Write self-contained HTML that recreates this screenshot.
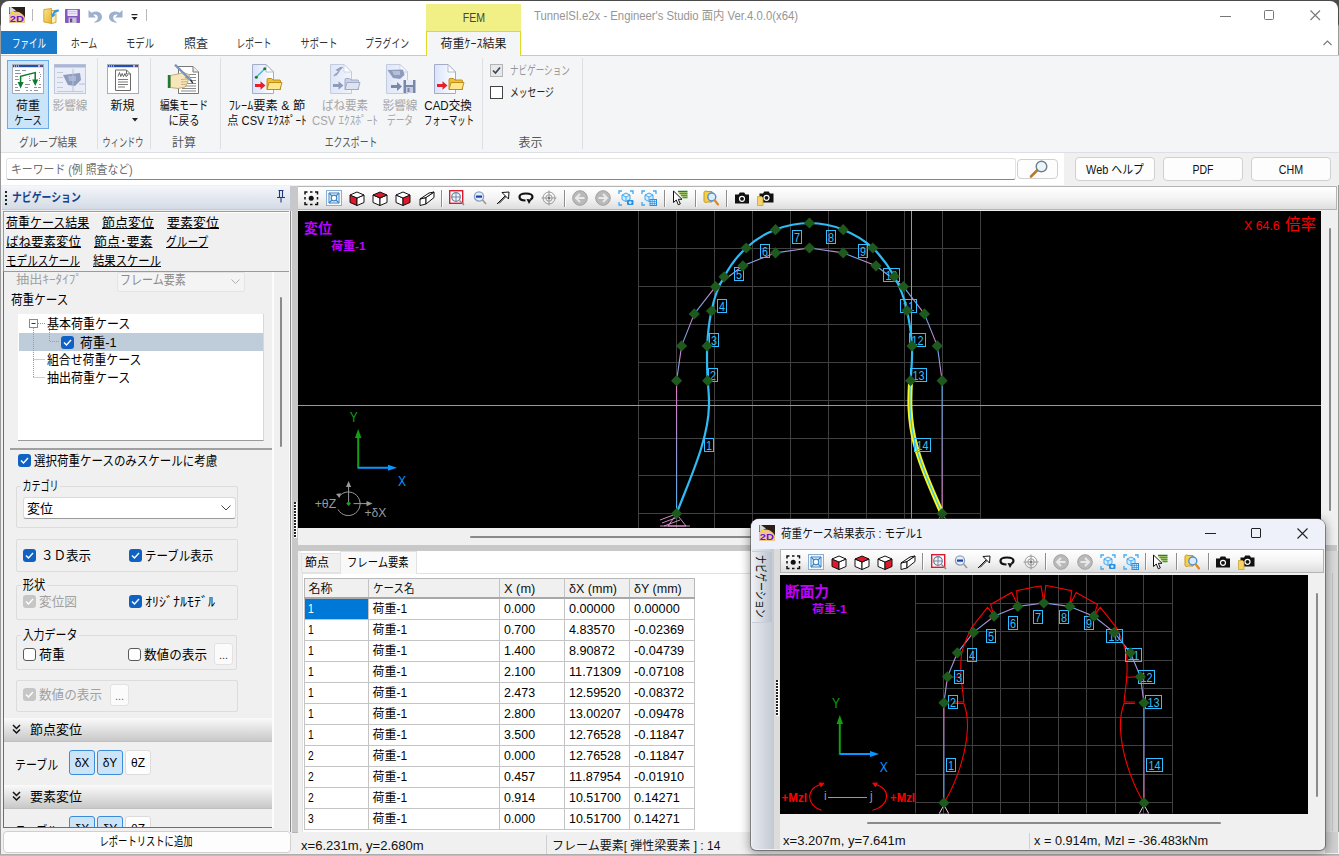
<!DOCTYPE html>
<html lang="ja"><head><meta charset="utf-8"><title>Engineer's Studio</title>
<style>
html,body{margin:0;padding:0;}
body{width:1339px;height:856px;overflow:hidden;position:relative;background:#f0f0f0;
font-family:"Liberation Sans","Noto Sans CJK JP",sans-serif;font-size:12px;}
.r{position:absolute;box-sizing:border-box;}
.t{position:absolute;white-space:nowrap;display:block;}
.u{text-decoration:underline;}
svg{overflow:visible;}
svg text{font-family:"Liberation Sans","Noto Sans CJK JP",sans-serif;}
</style></head>
<body>
<div class="r" style="left:0px;top:0px;width:1339px;height:856px;background:#f0f0f0;"></div>
<div class="r" style="left:0px;top:0px;width:1339px;height:14px;background:#4a4a4a;"></div>
<div class="r" style="left:1px;top:1px;width:1337px;height:54px;background:#ffffff;border-top-left-radius:8px;border-top-right-radius:8px;"></div>
<div class="r" style="left:0px;top:0px;width:1339px;height:1px;background:#4a4a4a;"></div>
<div class="r" style="left:0px;top:0px;width:1px;height:856px;background:linear-gradient(#4a4a4a,#4a4a4a 24px,#9a9a9a 26px);"></div>
<div class="r" style="left:1338px;top:0px;width:1px;height:856px;background:linear-gradient(#4a4a4a,#4a4a4a 24px,#9a9a9a 26px);"></div>
<svg class="r" style="left:9px;top:7px;" width="16" height="16" viewBox="0 0 16 16"><defs><clipPath id="ai1"><rect width="16" height="16"/></clipPath></defs><g clip-path="url(#ai1)"><rect x="0" y="0" width="16" height="16" fill="#2a2016"/>
<ellipse cx="6.5" cy="16" rx="10.5" ry="11.5" fill="#f0c68c"/>
<path d="M0.5 0 L2 0 L7 3.5 L2.5 5.5 L1.5 6 L0.5 6 Z" fill="#d8d8dc"/><rect x="3" y="4.5" width="2" height="2" fill="#f4e800"/>
<text x="0.8" y="15.3" font-size="9" font-weight="bold" fill="#6a10e0" textLength="14" lengthAdjust="spacingAndGlyphs">2D</text></g></svg>
<div class="r" style="left:32px;top:9px;width:1px;height:12px;background:#b8b8b8;"></div>
<svg class="r" style="left:43px;top:8px;" width="16" height="16" viewBox="0 0 16 16"><defs><linearGradient id="fo1" x1="0" x2="1" y1="0" y2="1"><stop offset="0" stop-color="#fbe68e"/><stop offset="1" stop-color="#e6b030"/></linearGradient></defs>
<path d="M0.8 1.5 L8.5 0.5 L8.5 15.5 L0.8 14 Z" fill="url(#fo1)" stroke="#c89b1c" stroke-width="0.8"/>
<path d="M8.5 2.5 L13 2.5 L13 14.5 L8.5 15.5 Z" fill="#fbeeb8" stroke="#c89b1c" stroke-width="0.8"/>
<path d="M15.8 1.6 C12 1.4 10.2 3 9.6 5.8 L8 5.2 L9.4 9.6 L12.8 6.8 L11.3 6.3 C11.8 4.6 13.2 3.6 15.8 3.8 Z" fill="#2f9be8"/></svg>
<svg class="r" style="left:65px;top:9px;" width="15" height="14" viewBox="0 0 15 14"><rect x="0" y="0" width="15" height="14" rx="0.8" fill="#8558c4"/>
<rect x="2.5" y="0.8" width="10" height="6.2" fill="#ece6f6"/><path d="M3.5 2.5 L11.5 2.5 M3.5 4.5 L11.5 4.5" stroke="#c9bce0" stroke-width="0.8"/>
<rect x="3.5" y="8.5" width="8" height="5.5" fill="#c4c4d0"/><rect x="5" y="9.5" width="2.2" height="3.8" fill="#6a4a9a"/></svg>
<svg class="r" style="left:87px;top:8px;" width="16" height="16" viewBox="0 0 16 16"><path d="M1.5 2 L1.5 9.5 L9 9.5 L6.2 6.8 C8.2 5.8 10.8 6.8 10.8 9.6 C10.8 12 9 13.6 6.5 14.4 C11 15 15 12.8 15 9 C15 4 9.2 1.8 4.4 4.8 Z" fill="#9db0cc"/></svg>
<svg class="r" style="left:108px;top:8px;" width="16" height="16" viewBox="0 0 16 16"><path d="M14.5 2 L14.5 9.5 L7 9.5 L9.8 6.8 C7.8 5.8 5.2 6.8 5.2 9.6 C5.2 12 7 13.6 9.5 14.4 C5 15 1 12.8 1 9 C1 4 6.8 1.8 11.6 4.8 Z" fill="#9db0cc"/></svg>
<svg class="r" style="left:130px;top:13.5px;" width="9" height="8" viewBox="0 0 9 8"><rect x="1.5" y="0" width="6" height="1.2" fill="#222"/><path d="M1.5 3 L7.5 3 L4.5 6.3 Z" fill="#222"/></svg>
<div class="r" style="left:146px;top:9px;width:1px;height:12px;background:#b8b8b8;"></div>
<span class="t " style="left:534px;top:8.0px;font-size:12px;line-height:16px;color:#969696;transform:scaleX(0.9429);transform-origin:left;">TunnelSI.e2x - Engineer's Studio 面内 Ver.4.0.0(x64)</span>
<div class="r" style="left:1220px;top:15.5px;width:11px;height:1px;background:#777;"></div>
<div class="r" style="left:1264px;top:10px;width:10px;height:10px;border:1px solid #777;border-radius:1.5px;"></div>
<svg class="r" style="left:1310px;top:10px;" width="11" height="11" viewBox="0 0 11 11"><path d="M0.5 0.5 L10 10 M10 0.5 L0.5 10" stroke="#777" stroke-width="1.1" fill="none"/></svg>
<svg class="r" style="left:1322.5px;top:40px;" width="10" height="6" viewBox="0 0 10 6"><path d="M0.5 5 L4.5 1 L8.5 5" stroke="#777" stroke-width="1.1" fill="none"/></svg>
<div class="r" style="left:426px;top:4px;width:95px;height:28px;background:#f0f087;"></div>
<span class="t " style="left:473.5px;top:10.0px;font-size:12px;line-height:16px;color:#444;transform:translateX(-50%) scaleX(0.8800);transform-origin:center;">FEM</span>
<div class="r" style="left:1px;top:31px;width:56px;height:23px;background:#1979ca;"></div>
<span class="t " style="left:29px;top:35.6px;font-size:12px;line-height:16px;color:#fff;transform:translateX(-50%) scaleX(0.7083);transform-origin:center;">ファイル</span>
<span class="t " style="left:84px;top:35.6px;font-size:12px;line-height:16px;color:#333;transform:translateX(-50%) scaleX(0.7500);transform-origin:center;">ホーム</span>
<span class="t " style="left:140px;top:35.6px;font-size:12px;line-height:16px;color:#333;transform:translateX(-50%) scaleX(0.7778);transform-origin:center;">モデル</span>
<span class="t " style="left:196px;top:35.6px;font-size:12px;line-height:16px;color:#333;transform:translateX(-50%) scaleX(1.0000);transform-origin:center;">照査</span>
<span class="t " style="left:254px;top:35.6px;font-size:12px;line-height:16px;color:#333;transform:translateX(-50%) scaleX(0.7292);transform-origin:center;">レポート</span>
<span class="t " style="left:319px;top:35.6px;font-size:12px;line-height:16px;color:#333;transform:translateX(-50%) scaleX(0.7708);transform-origin:center;">サポート</span>
<span class="t " style="left:387px;top:35.6px;font-size:12px;line-height:16px;color:#333;transform:translateX(-50%) scaleX(0.7333);transform-origin:center;">プラグイン</span>
<div class="r" style="left:1px;top:54.8px;width:1338px;height:1.3px;background:#dede1e;"></div>
<div class="r" style="left:426px;top:31px;width:94.5px;height:25px;background:#f4f5f7;border:1.5px solid #dcdc28;border-bottom:none;"></div>
<span class="t " style="left:473.5px;top:35.6px;font-size:12px;line-height:16px;color:#222;transform:translateX(-50%) scaleX(1.0000);transform-origin:center;">荷重ｹｰｽ結果</span>
<div class="r" style="left:1px;top:55.5px;width:1338px;height:97px;background:#f4f5f7;"></div>
<div class="r" style="left:1px;top:152px;width:1338px;height:1px;background:#dcdfe4;"></div>
<div class="r" style="left:7px;top:60px;width:42px;height:69px;background:#cce4f7;border:1px solid #6aaae6;"></div>
<svg class="r" style="left:12px;top:64px;" width="32" height="31" viewBox="0 0 32 31"><rect x="0.5" y="0.5" width="31" height="29" fill="#fff" stroke="#a9adb8"/>
<rect x="1" y="1" width="30" height="2.2" fill="#1f4fb4"/><rect x="26" y="1.4" width="2" height="1.2" fill="#fff"/><rect x="28.3" y="1.4" width="2" height="1.2" fill="#e33"/>
<g fill="#fff"><rect x="2" y="1.5" width="1" height="1"/><rect x="4" y="1.5" width="1" height="1"/><rect x="6" y="1.5" width="1" height="1"/></g><g fill="#8e939e"><rect x="3" y="6" width="5" height="1"/><rect x="10" y="6" width="4" height="1"/><rect x="3" y="9" width="6" height="1"/><rect x="3" y="12" width="3" height="1"/><rect x="3" y="15" width="4" height="1"/><rect x="3" y="20" width="2" height="1"/><rect x="3" y="23" width="3" height="1"/><rect x="3" y="26" width="5" height="1"/><rect x="13" y="20" width="5" height="1"/><rect x="13" y="23" width="3" height="1"/><rect x="14" y="26" width="2" height="1"/><rect x="18" y="26" width="2" height="1"/><rect x="22" y="23" width="3" height="1"/><rect x="22" y="26" width="4" height="1"/><rect x="27" y="20" width="2" height="1"/><rect x="26" y="23" width="3" height="1"/><rect x="17" y="12" width="1" height="1"/><rect x="17" y="14" width="1" height="1"/><rect x="17" y="16" width="2" height="1"/><rect x="27" y="8" width="1" height="1"/><rect x="28" y="10" width="1" height="1"/><rect x="28" y="12" width="1" height="1"/><rect x="27" y="14" width="1" height="1"/><rect x="27" y="16" width="1" height="1"/></g><path d="M8.6 19 L8.6 12.3 L23.2 8.6 L23.2 17" fill="none" stroke="#0c7a2c" stroke-width="1.5"/>
<path d="M5.6 18 L11.6 18 L8.6 24.5 Z M20.2 15.5 L26.2 15.5 L23.2 22 Z" fill="#0c7a2c"/></svg>
<span class="t " style="left:28px;top:98.3px;font-size:12px;line-height:16px;color:#111;transform:translateX(-50%) scaleX(1.0000);transform-origin:center;">荷重</span>
<span class="t " style="left:28px;top:113.3px;font-size:12px;line-height:16px;color:#111;transform:translateX(-50%) scaleX(0.7714);transform-origin:center;">ケース</span>
<svg class="r" style="left:54px;top:64px;" width="32" height="31" viewBox="0 0 32 31"><rect x="0.5" y="0.5" width="31" height="29" fill="#e9edf7" stroke="#c3c9dc"/>
<rect x="0.5" y="0.5" width="31" height="3" fill="#aab6d8"/>
<g fill="#c3c9dc"><rect x="3" y="8" width="6" height="1"/><rect x="3" y="13" width="6" height="1"/><rect x="3" y="18" width="6" height="1"/><rect x="3" y="23" width="6" height="1"/><rect x="3" y="27" width="26" height="1"/></g>
<path d="M9 11 L26 9 L27 16 L21 22 L14 21 Z" fill="#8d9bbd"/><path d="M14 12 L22 12 L22 17 L15 17 Z" fill="#aab6d4"/>
<path d="M19 5 L19 27 M25 20 L31 20" stroke="#b7c0da" stroke-width="1"/></svg>
<span class="t " style="left:69.5px;top:98.3px;font-size:12px;line-height:16px;color:#a6a6a6;transform:translateX(-50%) scaleX(0.9722);transform-origin:center;">影響線</span>
<span class="t " style="left:48px;top:134.5px;font-size:12px;line-height:16px;color:#555;transform:translateX(-50%) scaleX(0.8169);transform-origin:center;">グループ結果</span>
<div class="r" style="left:97px;top:58px;width:1px;height:91px;background:#dcdfe4;"></div>
<svg class="r" style="left:107px;top:64px;" width="32" height="31" viewBox="0 0 32 31"><rect x="0.5" y="0.5" width="31" height="29" fill="#fff" stroke="#a9adb8"/>
<rect x="1" y="1" width="30" height="2.2" fill="#1f4fb4"/><rect x="26" y="1.4" width="2" height="1.2" fill="#fff"/><rect x="28.3" y="1.4" width="2" height="1.2" fill="#e33"/>
<g fill="#fff"><rect x="2" y="1.5" width="1" height="1"/><rect x="4" y="1.5" width="1" height="1"/><rect x="6" y="1.5" width="1" height="1"/></g>
<path d="M8.5 6 L19.5 6 L23.5 10 L23.5 26.5 L8.5 26.5 Z" fill="#fff" stroke="#6a6a6a"/><path d="M19.5 6 L19.5 10 L23.5 10" fill="none" stroke="#6a6a6a"/>
<path d="M11 12.5 L12.5 8.5 L13.8 12.5 L15.2 9.5 L16.5 12.5 L18 9.5 L19 12.5 L21 11" fill="none" stroke="#555" stroke-width="0.9"/><g fill="#7a7a7a"><rect x="11" y="15" width="10" height="1"/><rect x="11" y="17.5" width="10" height="1"/><rect x="11" y="20" width="10" height="1"/><rect x="11" y="22.5" width="7" height="1"/></g></svg>
<span class="t " style="left:122.5px;top:98.3px;font-size:12px;line-height:16px;color:#111;transform:translateX(-50%) scaleX(1.0000);transform-origin:center;">新規</span>
<svg class="r" style="left:132px;top:118px;" width="7" height="4" viewBox="0 0 7 4"><path d="M0 0 L6 0 L3 3.5 Z" fill="#222"/></svg>
<span class="t " style="left:122.5px;top:134.5px;font-size:12px;line-height:16px;color:#555;transform:translateX(-50%) scaleX(0.6833);transform-origin:center;">ウィンドウ</span>
<div class="r" style="left:150px;top:58px;width:1px;height:91px;background:#dcdfe4;"></div>
<svg class="r" style="left:167px;top:64px;" width="33" height="31" viewBox="0 0 33 31"><path d="M11.5 2.5 L26 2.5 L31.5 8 L31.5 29.5 L11.5 29.5 Z" fill="#fff" stroke="#777"/><path d="M26 2.5 L26 8 L31.5 8" fill="#eee" stroke="#777"/><g fill="#8a8a8a"><rect x="22" y="10" width="7" height="1"/><rect x="23" y="13" width="6" height="1"/><rect x="23" y="16" width="6" height="1"/><rect x="20" y="19" width="9" height="1"/><rect x="18" y="21.5" width="11" height="1"/><rect x="15" y="24" width="14" height="1"/><rect x="14" y="26.5" width="15" height="1"/></g><path d="M3.5 11.5 L11 10 L16 8.5 L22 10.5 L22.5 13 L18 13.5 L21 15 L21 17.5 L20 20 L18 23 L11 24.5 L3.5 23.5 Z" fill="#f7e6bc" stroke="#b99a62" stroke-width="0.8"/>
<path d="M14 15.5 L20.5 15 M14 18 L20.5 17.6 M14 20.5 L19.5 20.2" stroke="#b99a62" stroke-width="0.7"/>
<rect x="0.8" y="11" width="2.6" height="13" fill="#1f7a33"/>
<path d="M8 0.8 L24 16.5" stroke="#5b7fb0" stroke-width="2.2"/><path d="M8 0.8 L24 16.5" stroke="#a9c0e0" stroke-width="0.7"/><path d="M23.5 16 L25.8 19" stroke="#333" stroke-width="1.3"/></svg>
<span class="t " style="left:184px;top:98.3px;font-size:12px;line-height:16px;color:#111;transform:translateX(-50%) scaleX(0.8000);transform-origin:center;">編集モード</span>
<span class="t " style="left:184px;top:113.3px;font-size:12px;line-height:16px;color:#111;transform:translateX(-50%) scaleX(0.8611);transform-origin:center;">に戻る</span>
<span class="t " style="left:184px;top:134.5px;font-size:12px;line-height:16px;color:#555;transform:translateX(-50%) scaleX(1.0000);transform-origin:center;">計算</span>
<div class="r" style="left:220px;top:58px;width:1px;height:91px;background:#dcdfe4;"></div>
<svg class="r" style="left:252px;top:64px;" width="32" height="31" viewBox="0 0 32 31"><defs><linearGradient id="pg1" x1="0" x2="1" y1="0" y2="0"><stop offset="0" stop-color="#d9e3fb"/><stop offset="1" stop-color="#ffffff"/></linearGradient></defs><path d="M0.5 0.5 L14 0.5 L21.5 8 L21.5 29.5 L0.5 29.5 Z" fill="url(#pg1)" stroke="#a3acc8"/><path d="M14 0.5 L14 8 L21.5 8 Z" fill="#fff" stroke="#a3acc8" stroke-width="0.8"/><path d="M4.5 13 L12.5 5" stroke="#3bb6d8" stroke-width="1.2"/><circle cx="4.3" cy="13.2" r="1.5" fill="#1c7a2c"/><circle cx="12.7" cy="4.8" r="1.5" fill="#1c7a2c"/><path d="M3 20 L8.5 20 L8.5 17.2 L13.5 21.5 L8.5 25.8 L8.5 23 L3 23 Z" fill="#e8202a"/><path d="M15 15.5 Q15 14.5 16 14.5 L19.5 14.5 L21 16 L27.5 16 Q28.5 16 28.5 17 L28.5 25.5 L15 25.5 Z" fill="#f2be3a" stroke="#b8860b" stroke-width="0.9"/><path d="M17 18.5 L30 18.5 L28 25.5 L15 25.5 Z" fill="#fde68e" stroke="#b8860b" stroke-width="0.9"/></svg>
<span class="t " style="left:266.5px;top:98.3px;font-size:12px;line-height:16px;color:#111;transform:translateX(-50%) scaleX(1.0267);transform-origin:center;">ﾌﾚｰﾑ要素 &amp; 節</span>
<span class="t " style="left:267px;top:113.3px;font-size:12px;line-height:16px;color:#111;transform:translateX(-50%) scaleX(0.9294);transform-origin:center;">点 CSV ｴｸｽﾎﾟｰﾄ</span>
<svg class="r" style="left:330px;top:64px;" width="32" height="31" viewBox="0 0 32 31"><defs><linearGradient id="pg2" x1="0" x2="1" y1="0" y2="0"><stop offset="0" stop-color="#dfe6f7"/><stop offset="1" stop-color="#f1f4fb"/></linearGradient></defs><path d="M0.5 0.5 L14 0.5 L21.5 8 L21.5 29.5 L0.5 29.5 Z" fill="url(#pg2)" stroke="#c3cbe0"/><path d="M14 0.5 L14 8 L21.5 8 Z" fill="#fff" stroke="#c3cbe0" stroke-width="0.8"/><path d="M4 12 L6.5 9.5 M6 11 L9 7 L7 6 L11 3.5 L9.5 6 L12.5 3" stroke="#93a0c2" stroke-width="1.5" fill="none"/><path d="M3 20 L8.5 20 L8.5 17.2 L13.5 21.5 L8.5 25.8 L8.5 23 L3 23 Z" fill="#8d9bbd"/><path d="M15 15.5 Q15 14.5 16 14.5 L19.5 14.5 L21 16 L27.5 16 Q28.5 16 28.5 17 L28.5 25.5 L15 25.5 Z" fill="#c9d2e6" stroke="#9aa6c2" stroke-width="0.9"/><path d="M17 18.5 L30 18.5 L28 25.5 L15 25.5 Z" fill="#dde3f0" stroke="#9aa6c2" stroke-width="0.9"/></svg>
<span class="t " style="left:344.5px;top:98.3px;font-size:12px;line-height:16px;color:#a6a6a6;transform:translateX(-50%) scaleX(0.9583);transform-origin:center;">ばね要素</span>
<span class="t " style="left:344.5px;top:113.3px;font-size:12px;line-height:16px;color:#a6a6a6;transform:translateX(-50%) scaleX(0.9429);transform-origin:center;">CSV ｴｸｽﾎﾟｰﾄ</span>
<svg class="r" style="left:386px;top:64px;" width="31" height="31" viewBox="0 0 31 31"><defs><linearGradient id="pg3" x1="0" x2="1" y1="0" y2="0"><stop offset="0" stop-color="#dfe6f7"/><stop offset="1" stop-color="#f1f4fb"/></linearGradient></defs><path d="M0.5 0.5 L14 0.5 L21.5 8 L21.5 29.5 L0.5 29.5 Z" fill="url(#pg3)" stroke="#c3cbe0"/><path d="M14 0.5 L14 8 L21.5 8 Z" fill="#fff" stroke="#c3cbe0" stroke-width="0.8"/><path d="M1.5 6 L17 5.5 L18.5 11 L14 15 L7 14 Z" fill="#8d9bbd"/><path d="M6 7 L14 7 L14 11 L8 11 Z" fill="#b5bfd8"/><path d="M5 21 L11 21 L11 18 L16 22.5 L11 27 L11 24 L5 24 Z" fill="#7a88a8"/><rect x="17.5" y="16" width="12" height="13" fill="#7a88a8"/><rect x="20" y="16" width="7" height="5" fill="#e6ebf7"/><rect x="20" y="23" width="7" height="6" fill="#c5cce0"/><rect x="21.5" y="24" width="2" height="4" fill="#7a88a8"/></svg>
<span class="t " style="left:399.5px;top:98.3px;font-size:12px;line-height:16px;color:#a6a6a6;transform:translateX(-50%) scaleX(0.9722);transform-origin:center;">影響線</span>
<span class="t " style="left:399.5px;top:113.3px;font-size:12px;line-height:16px;color:#a6a6a6;transform:translateX(-50%) scaleX(0.7222);transform-origin:center;">データ</span>
<svg class="r" style="left:434px;top:64px;" width="32" height="31" viewBox="0 0 32 31"><defs><linearGradient id="pg4" x1="0" x2="1" y1="0" y2="0"><stop offset="0" stop-color="#d9e3fb"/><stop offset="1" stop-color="#ffffff"/></linearGradient></defs><path d="M0.5 0.5 L14 0.5 L21.5 8 L21.5 29.5 L0.5 29.5 Z" fill="url(#pg4)" stroke="#a3acc8"/><path d="M14 0.5 L14 8 L21.5 8 Z" fill="#fff" stroke="#a3acc8" stroke-width="0.8"/><path d="M3 20 L8.5 20 L8.5 17.2 L13.5 21.5 L8.5 25.8 L8.5 23 L3 23 Z" fill="#e8202a"/><path d="M15 15.5 Q15 14.5 16 14.5 L19.5 14.5 L21 16 L27.5 16 Q28.5 16 28.5 17 L28.5 25.5 L15 25.5 Z" fill="#f2be3a" stroke="#b8860b" stroke-width="0.9"/><path d="M17 18.5 L30 18.5 L28 25.5 L15 25.5 Z" fill="#fde68e" stroke="#b8860b" stroke-width="0.9"/></svg>
<span class="t " style="left:448px;top:98.3px;font-size:12px;line-height:16px;color:#111;transform:translateX(-50%) scaleX(0.9592);transform-origin:center;">CAD交換</span>
<span class="t " style="left:448.5px;top:113.3px;font-size:12px;line-height:16px;color:#111;transform:translateX(-50%) scaleX(0.6944);transform-origin:center;">フォーマット</span>
<span class="t " style="left:350.5px;top:134.5px;font-size:12px;line-height:16px;color:#555;transform:translateX(-50%) scaleX(0.7361);transform-origin:center;">エクスポート</span>
<div class="r" style="left:482px;top:58px;width:1px;height:91px;background:#dcdfe4;"></div>
<div class="r" style="left:490px;top:64px;width:13px;height:13px;background:#e8e8e8;border:1px solid #b4b4b4;"></div>
<svg class="r" style="left:492px;top:66px;" width="9" height="9" viewBox="0 0 9 9"><path d="M1 4.5 L3.5 7 L8 1.5" stroke="#3a4660" stroke-width="1.7" fill="none"/></svg>
<span class="t " style="left:510px;top:62.8px;font-size:12px;line-height:16px;color:#969696;transform:scaleX(0.7143);transform-origin:left;">ナビゲーション</span>
<div class="r" style="left:490px;top:86px;width:13px;height:13px;background:#fff;border:1px solid #444;"></div>
<span class="t " style="left:510px;top:84.8px;font-size:12px;line-height:16px;color:#222;transform:scaleX(0.7333);transform-origin:left;">メッセージ</span>
<span class="t " style="left:530.5px;top:134.5px;font-size:12px;line-height:16px;color:#555;transform:translateX(-50%) scaleX(1.0000);transform-origin:center;">表示</span>
<div class="r" style="left:582px;top:58px;width:1px;height:91px;background:#dcdfe4;"></div>
<div class="r" style="left:1px;top:153px;width:1063px;height:32px;background:#ffffff;"></div>
<div class="r" style="left:1064px;top:153px;width:275px;height:32px;background:#f0f0f0;"></div>
<div class="r" style="left:6px;top:158px;width:1010px;height:22px;background:#fff;border:1px solid #e3e3e3;border-radius:3px;border-bottom:1px solid #868686;"></div>
<span class="t " style="left:11px;top:161.5px;font-size:12px;line-height:16px;color:#6e6e6e;transform:scaleX(0.9037);transform-origin:left;">キーワード (例 照査など)</span>
<div class="r" style="left:1017px;top:159px;width:41px;height:20px;background:#fdfdfd;border:1px solid #d0d0d0;border-radius:4px;"></div>
<svg class="r" style="left:1029px;top:160px;" width="20" height="18" viewBox="0 0 20 18"><path d="M2 16.5 L9 9.5" stroke="#b87a2c" stroke-width="2.6" stroke-linecap="round"/><circle cx="12.5" cy="6.5" r="5.3" fill="#e9f4fb" stroke="#6f7f8c" stroke-width="1.4"/></svg>
<div class="r" style="left:1075px;top:157px;width:80px;height:24px;background:#fdfdfd;border:1px solid #d0d0d0;border-radius:4px;"></div>
<span class="t " style="left:1115.0px;top:161.8px;font-size:12px;line-height:16px;color:#111;transform:translateX(-50%) scaleX(0.9062);transform-origin:center;">Web ヘルプ</span>
<div class="r" style="left:1163px;top:157px;width:80px;height:24px;background:#fdfdfd;border:1px solid #d0d0d0;border-radius:4px;"></div>
<span class="t " style="left:1203.0px;top:161.8px;font-size:12px;line-height:16px;color:#111;transform:translateX(-50%) scaleX(0.8750);transform-origin:center;">PDF</span>
<div class="r" style="left:1251px;top:157px;width:80px;height:24px;background:#fdfdfd;border:1px solid #d0d0d0;border-radius:4px;"></div>
<span class="t " style="left:1291.0px;top:161.8px;font-size:12px;line-height:16px;color:#111;transform:translateX(-50%) scaleX(0.8889);transform-origin:center;">CHM</span>
<div class="r" style="left:1px;top:832px;width:1338px;height:22px;background:#f0f0f0;"></div>
<div class="r" style="left:292px;top:831px;width:1046px;height:1.5px;background:#b4b4b4;"></div>
<div class="r" style="left:0px;top:853.5px;width:1339px;height:2.5px;background:linear-gradient(#a8a8a8,#c4c4c4);"></div>
<span class="t " style="left:301px;top:837.8px;font-size:12px;line-height:16px;color:#111;transform:scaleX(1.0885);transform-origin:left;">x=6.231m, y=2.680m</span>
<div class="r" style="left:546px;top:835px;width:1px;height:19px;background:#d0d0d0;"></div>
<span class="t " style="left:552px;top:837.8px;font-size:12px;line-height:16px;color:#111;transform:scaleX(1.0000);transform-origin:left;">フレーム要素[ 弾性梁要素 ] :  14</span>
<div class="r" style="left:1px;top:185px;width:291px;height:648px;background:#f0f0f0;"></div>
<div class="r" style="left:2px;top:186px;width:289px;height:24px;background:linear-gradient(#f4f6fa,#e2e7ef 55%,#d5dbe6);border-bottom:1px solid #c5cbd6;"></div>
<svg class="r" style="left:5px;top:190.5px;" width="3" height="16" viewBox="0 0 3 16"><rect x="0" y="0" width="2" height="2" fill="#222"/><rect x="0" y="4" width="2" height="2" fill="#222"/><rect x="0" y="8" width="2" height="2" fill="#222"/><rect x="0" y="12" width="2" height="2" fill="#222"/></svg>
<span class="t " style="left:12px;top:189.5px;font-size:12px;line-height:16px;color:#15428b;font-weight:bold;transform:scaleX(0.8214);transform-origin:left;">ナビゲーション</span>
<svg class="r" style="left:276px;top:190px;" width="10" height="13" viewBox="0 0 10 13"><path d="M2.5 0.5 L7.5 0.5 M3.5 0.5 L3.5 7 M6.5 0.5 L6.5 7 M1 7.5 L9 7.5 M5 7.5 L5 12.5" stroke="#1e3a7a" stroke-width="1.1" fill="none"/></svg>
<div class="r" style="left:3px;top:211px;width:287px;height:61px;background:#f0f0f0;border:1px solid #9a9a9a;"></div>
<div class="r" style="left:4px;top:212px;width:285px;height:1px;background:#fff;"></div>
<span class="t u" style="left:6px;top:213.6px;font-size:13px;line-height:18px;color:#000;transform:scaleX(0.9222);transform-origin:left;">荷重ケース結果</span>
<span class="t u" style="left:102px;top:213.6px;font-size:13px;line-height:18px;color:#000;transform:scaleX(1.0000);transform-origin:left;">節点変位</span>
<span class="t u" style="left:167px;top:213.6px;font-size:13px;line-height:18px;color:#000;transform:scaleX(1.0000);transform-origin:left;">要素変位</span>
<span class="t u" style="left:6px;top:232.6px;font-size:13px;line-height:18px;color:#000;transform:scaleX(0.9615);transform-origin:left;">ばね要素変位</span>
<span class="t u" style="left:94px;top:232.6px;font-size:13px;line-height:18px;color:#000;transform:scaleX(1.0000);transform-origin:left;">節点･要素</span>
<span class="t u" style="left:166px;top:232.6px;font-size:13px;line-height:18px;color:#000;transform:scaleX(0.8235);transform-origin:left;">グループ</span>
<span class="t u" style="left:6px;top:251.6px;font-size:13px;line-height:18px;color:#000;transform:scaleX(0.8132);transform-origin:left;">モデルスケール</span>
<span class="t u" style="left:93px;top:251.6px;font-size:13px;line-height:18px;color:#000;transform:scaleX(0.8718);transform-origin:left;">結果スケール</span>
<div class="r" style="left:3px;top:271px;width:287px;height:557px;background:#f0f0f0;border:1px solid #6e6e6e;border-top:1px solid #9a9a9a;"></div>
<div class="r" style="left:272px;top:272px;width:17px;height:556px;background:#f0f0f0;"></div>
<div class="r" style="left:271.5px;top:272px;width:2px;height:556px;background:#fcfcfc;"></div>
<div class="r" style="left:280px;top:297px;width:2px;height:150px;background:#8a8a8a;border-radius:1px;"></div>
<span class="t " style="left:16px;top:272.0px;font-size:12px;line-height:16px;color:#a0a0a0;transform:scaleX(1.1000);transform-origin:left;">抽出ｷｰﾀｲﾌﾟ</span>
<div class="r" style="left:117px;top:272px;width:128px;height:20px;background:#f4f4f4;border:1px solid #e4e4e4;border-radius:2px;"></div>
<span class="t " style="left:120px;top:271.3px;font-size:13px;line-height:17px;color:#8a8a8a;transform:scaleX(0.8462);transform-origin:left;">フレーム要素</span>
<svg class="r" style="left:231px;top:279px;" width="9" height="5" viewBox="0 0 9 5"><path d="M0.5 0.5 L4.5 4.5 L8.5 0.5" stroke="#b0b0b0" stroke-width="1" fill="none"/></svg>
<span class="t " style="left:11px;top:291.0px;font-size:13px;line-height:17px;color:#000;transform:scaleX(0.8906);transform-origin:left;">荷重ケース</span>
<div class="r" style="left:18px;top:314px;width:246px;height:127px;background:#fff;border-bottom:1px solid #9a9a9a;border-right:1px solid #d8d8d8;"></div>
<div class="r" style="left:19px;top:333px;width:244px;height:18px;background:#bfcddb;"></div>
<svg class="r" style="left:18px;top:314px;" width="60" height="80" viewBox="0 0 60 80"><path d="M15.5 14 L15.5 63 M20 9.5 L27 9.5 M15.5 45.5 L27 45.5 M15.5 63.5 L27 63.5 M31.5 14 L31.5 27.5 L41 27.5" stroke="#9a9a9a" stroke-width="1" stroke-dasharray="1 1" fill="none"/>
<rect x="11.5" y="5.5" width="8" height="8" fill="#fff" stroke="#8a8a8a"/><path d="M13.5 9.5 L17.5 9.5" stroke="#333"/></svg>
<span class="t " style="left:47px;top:315.0px;font-size:13px;line-height:17px;color:#000;transform:scaleX(0.9222);transform-origin:left;">基本荷重ケース</span>
<div class="r" style="left:61px;top:336px;width:13px;height:13px;background:#0f62c4;border-radius:3px;"></div>
<svg class="r" style="left:63px;top:339px;" width="9" height="7" viewBox="0 0 9 7"><path d="M1 3.5 L3.5 6 L8 1" stroke="#fff" stroke-width="1.4" fill="none"/></svg>
<span class="t " style="left:80px;top:333.5px;font-size:13px;line-height:17px;color:#000;transform:scaleX(0.9737);transform-origin:left;">荷重-1</span>
<span class="t " style="left:47px;top:351.0px;font-size:13px;line-height:17px;color:#000;transform:scaleX(0.9126);transform-origin:left;">組合せ荷重ケース</span>
<span class="t " style="left:47px;top:369.0px;font-size:13px;line-height:17px;color:#000;transform:scaleX(0.9222);transform-origin:left;">抽出荷重ケース</span>
<div class="r" style="left:10px;top:447.5px;width:262px;height:2px;background:#a0a0a0;"></div>
<div class="r" style="left:18px;top:454px;width:13px;height:13px;background:#0f62c4;border-radius:3px;"></div>
<svg class="r" style="left:20px;top:457px;" width="9" height="7" viewBox="0 0 9 7"><path d="M1 3.5 L3.5 6 L8 1" stroke="#fff" stroke-width="1.4" fill="none"/></svg>
<span class="t " style="left:34px;top:452.0px;font-size:13px;line-height:17px;color:#000;transform:scaleX(0.8841);transform-origin:left;">選択荷重ケースのみスケールに考慮</span>
<div class="r" style="left:15.5px;top:485.5px;width:222.5px;height:42px;border:1px solid #dcdcdc;border-radius:2px;"></div>
<span class="t " style="left:21px;top:477.0px;font-size:13px;line-height:17px;color:#000;transform:scaleX(0.6964);transform-origin:left;background:#f0f0f0;padding:0 2px;">カテゴリ</span>
<div class="r" style="left:23px;top:496.5px;width:212.5px;height:22px;background:#fff;border:1px solid #dadada;border-radius:3px;border-bottom:1px solid #9a9a9a;"></div>
<span class="t " style="left:27px;top:499.5px;font-size:13px;line-height:17px;color:#000;transform:scaleX(1.0000);transform-origin:left;">変位</span>
<svg class="r" style="left:221px;top:505px;" width="10" height="6" viewBox="0 0 10 6"><path d="M0.5 0.5 L5 5 L9.5 0.5" stroke="#444" stroke-width="1" fill="none"/></svg>
<div class="r" style="left:15.5px;top:539px;width:222.5px;height:32.5px;border:1px solid #dcdcdc;border-radius:2px;"></div>
<div class="r" style="left:23px;top:549px;width:13px;height:13px;background:#0f62c4;border-radius:3px;"></div>
<svg class="r" style="left:25px;top:552px;" width="9" height="7" viewBox="0 0 9 7"><path d="M1 3.5 L3.5 6 L8 1" stroke="#fff" stroke-width="1.4" fill="none"/></svg>
<span class="t " style="left:41px;top:547.0px;font-size:13px;line-height:17px;color:#000;transform:scaleX(0.9615);transform-origin:left;">３Ｄ表示</span>
<div class="r" style="left:129px;top:549px;width:13px;height:13px;background:#0f62c4;border-radius:3px;"></div>
<svg class="r" style="left:131px;top:552px;" width="9" height="7" viewBox="0 0 9 7"><path d="M1 3.5 L3.5 6 L8 1" stroke="#fff" stroke-width="1.4" fill="none"/></svg>
<span class="t " style="left:145px;top:547.0px;font-size:13px;line-height:17px;color:#000;transform:scaleX(0.8831);transform-origin:left;">テーブル表示</span>
<div class="r" style="left:15.5px;top:584.5px;width:222.5px;height:35px;border:1px solid #dcdcdc;border-radius:2px;"></div>
<span class="t " style="left:21px;top:575.5px;font-size:13px;line-height:17px;color:#000;transform:scaleX(0.8667);transform-origin:left;background:#f0f0f0;padding:0 2px;">形状</span>
<div class="r" style="left:23px;top:595px;width:13px;height:13px;background:#c6c6c6;border-radius:3px;"></div>
<svg class="r" style="left:25px;top:598px;" width="9" height="7" viewBox="0 0 9 7"><path d="M1 3.5 L3.5 6 L8 1" stroke="#fff" stroke-width="1.4" fill="none"/></svg>
<span class="t " style="left:39px;top:593.0px;font-size:13px;line-height:17px;color:#a0a0a0;transform:scaleX(0.9744);transform-origin:left;">変位図</span>
<div class="r" style="left:129px;top:595px;width:13px;height:13px;background:#0f62c4;border-radius:3px;"></div>
<svg class="r" style="left:131px;top:598px;" width="9" height="7" viewBox="0 0 9 7"><path d="M1 3.5 L3.5 6 L8 1" stroke="#fff" stroke-width="1.4" fill="none"/></svg>
<span class="t " style="left:145px;top:593.0px;font-size:13px;line-height:17px;color:#000;transform:scaleX(1.0769);transform-origin:left;">ｵﾘｼﾞﾅﾙﾓﾃﾞﾙ</span>
<div class="r" style="left:15.5px;top:634.5px;width:221.5px;height:35px;border:1px solid #dcdcdc;border-radius:2px;"></div>
<span class="t " style="left:21px;top:625.5px;font-size:13px;line-height:17px;color:#000;transform:scaleX(0.8406);transform-origin:left;background:#f0f0f0;padding:0 2px;">入力データ</span>
<div class="r" style="left:23px;top:648px;width:13px;height:13px;background:#fff;border:1px solid #5a5a5a;border-radius:3px;"></div>
<span class="t " style="left:39px;top:646.0px;font-size:13px;line-height:17px;color:#000;transform:scaleX(1.0000);transform-origin:left;">荷重</span>
<div class="r" style="left:128px;top:648px;width:13px;height:13px;background:#fff;border:1px solid #5a5a5a;border-radius:3px;"></div>
<span class="t " style="left:144px;top:646.0px;font-size:13px;line-height:17px;color:#000;transform:scaleX(0.9692);transform-origin:left;">数値の表示</span>
<div class="r" style="left:214px;top:643px;width:19px;height:22px;background:#fbfbfb;border:1px solid #e2e2e2;border-radius:3px;"></div>
<span class="t " style="left:223.5px;top:647.5px;font-size:11px;line-height:15px;color:#333;transform:translateX(-50%);">...</span>
<div class="r" style="left:15.5px;top:679.5px;width:222.5px;height:32px;border:1px solid #dcdcdc;border-radius:2px;"></div>
<div class="r" style="left:23px;top:688px;width:13px;height:13px;background:#c6c6c6;border-radius:3px;"></div>
<svg class="r" style="left:25px;top:691px;" width="9" height="7" viewBox="0 0 9 7"><path d="M1 3.5 L3.5 6 L8 1" stroke="#fff" stroke-width="1.4" fill="none"/></svg>
<span class="t " style="left:39px;top:686.0px;font-size:13px;line-height:17px;color:#a0a0a0;transform:scaleX(0.9692);transform-origin:left;">数値の表示</span>
<div class="r" style="left:110px;top:684px;width:19px;height:22px;background:#fbfbfb;border:1px solid #e2e2e2;border-radius:3px;"></div>
<span class="t " style="left:119.5px;top:688.5px;font-size:11px;line-height:15px;color:#666;transform:translateX(-50%);">...</span>
<div class="r" style="left:4px;top:717.8px;width:268px;height:24.5px;background:linear-gradient(#fafafa,#e6e6e6 40%,#c8c8c8);border-bottom:1px solid #c0c0c0;"></div>
<svg class="r" style="left:12px;top:724.3px;" width="9" height="11" viewBox="0 0 9 11"><path d="M1 1 L4.5 4.5 L8 1 M1 5.5 L4.5 9 L8 5.5" stroke="#111" stroke-width="1.5" fill="none"/></svg>
<span class="t " style="left:30px;top:720.8px;font-size:13px;line-height:17px;color:#000;transform:scaleX(1.0000);transform-origin:left;">節点変位</span>
<span class="t " style="left:15px;top:755.5px;font-size:13px;line-height:17px;color:#000;transform:scaleX(0.8431);transform-origin:left;">テーブル</span>
<div class="r" style="left:69px;top:750px;width:26px;height:25px;background:#cce4f7;border:1px solid #3c8cd8;border-radius:3px;"></div>
<span class="t " style="left:82px;top:755.0px;font-size:12px;line-height:16px;color:#000;transform:translateX(-50%);">δX</span>
<div class="r" style="left:97px;top:750px;width:26px;height:25px;background:#cce4f7;border:1px solid #3c8cd8;border-radius:3px;"></div>
<span class="t " style="left:110px;top:755.0px;font-size:12px;line-height:16px;color:#000;transform:translateX(-50%);">δY</span>
<div class="r" style="left:125px;top:750px;width:26px;height:25px;background:#fdfdfd;border:1px solid #dcdcdc;border-radius:3px;"></div>
<span class="t " style="left:138px;top:755.0px;font-size:12px;line-height:16px;color:#000;transform:translateX(-50%);">θZ</span>
<div class="r" style="left:4px;top:784.7px;width:268px;height:24.5px;background:linear-gradient(#fafafa,#e6e6e6 40%,#c8c8c8);border-bottom:1px solid #c0c0c0;"></div>
<svg class="r" style="left:12px;top:791.2px;" width="9" height="11" viewBox="0 0 9 11"><path d="M1 1 L4.5 4.5 L8 1 M1 5.5 L4.5 9 L8 5.5" stroke="#111" stroke-width="1.5" fill="none"/></svg>
<span class="t " style="left:30px;top:787.7px;font-size:13px;line-height:17px;color:#000;transform:scaleX(1.0000);transform-origin:left;">要素変位</span>
<div class="r" style="left:0px;top:810px;width:272px;height:17px;overflow:hidden;">
<span class="t " style="left:15px;top:11.5px;font-size:13px;line-height:17px;color:#000;transform:scaleX(0.8431);transform-origin:left;">テーブル</span>
<div class="r" style="left:69px;top:6px;width:26px;height:25px;background:#cce4f7;border:1px solid #3c8cd8;border-radius:3px;"></div>
<span class="t " style="left:82px;top:11.0px;font-size:12px;line-height:16px;color:#000;transform:translateX(-50%);">δX</span>
<div class="r" style="left:97px;top:6px;width:26px;height:25px;background:#cce4f7;border:1px solid #3c8cd8;border-radius:3px;"></div>
<span class="t " style="left:110px;top:11.0px;font-size:12px;line-height:16px;color:#000;transform:translateX(-50%);">δY</span>
<div class="r" style="left:125px;top:6px;width:26px;height:25px;background:#fdfdfd;border:1px solid #dcdcdc;border-radius:3px;"></div>
<span class="t " style="left:138px;top:11.0px;font-size:12px;line-height:16px;color:#000;transform:translateX(-50%);">θZ</span>
</div>
<div class="r" style="left:3px;top:830.5px;width:288px;height:22px;background:#fdfdfd;border:1px solid #d0d0d0;border-radius:4px;"></div>
<span class="t " style="left:146px;top:834.0px;font-size:12px;line-height:16px;color:#000;transform:translateX(-50%) scaleX(0.7750);transform-origin:center;">レポートリストに追加</span>
<div class="r" style="left:298px;top:186px;width:1039px;height:24px;background:linear-gradient(#ffffff,#f4f4f4 50%,#dedede);border:1px solid #b4b4b4;border-left:none;"></div>
<div class="r" style="left:290px;top:186px;width:1.5px;height:25px;background:#c4c8d0;"></div>
<div class="r" style="left:289.2px;top:211px;width:1px;height:621px;background:#fafafa;"></div>
<div class="r" style="left:290.2px;top:211px;width:1.2px;height:621px;background:#8c8c8c;"></div>
<div class="r" style="left:291.5px;top:186px;width:6.5px;height:646px;background:#c8c8c8;"></div>
<svg class="r" style="left:294px;top:502px;" width="3" height="36" viewBox="0 0 3 36"><rect x="0" y="0" width="3" height="3" fill="#fff"/><rect x="0" y="0" width="2" height="2" fill="#222"/><rect x="0" y="3" width="3" height="3" fill="#fff"/><rect x="0" y="3" width="2" height="2" fill="#222"/><rect x="0" y="6" width="3" height="3" fill="#fff"/><rect x="0" y="6" width="2" height="2" fill="#222"/><rect x="0" y="9" width="3" height="3" fill="#fff"/><rect x="0" y="9" width="2" height="2" fill="#222"/><rect x="0" y="12" width="3" height="3" fill="#fff"/><rect x="0" y="12" width="2" height="2" fill="#222"/><rect x="0" y="15" width="3" height="3" fill="#fff"/><rect x="0" y="15" width="2" height="2" fill="#222"/><rect x="0" y="18" width="3" height="3" fill="#fff"/><rect x="0" y="18" width="2" height="2" fill="#222"/><rect x="0" y="21" width="3" height="3" fill="#fff"/><rect x="0" y="21" width="2" height="2" fill="#222"/><rect x="0" y="24" width="3" height="3" fill="#fff"/><rect x="0" y="24" width="2" height="2" fill="#222"/><rect x="0" y="27" width="3" height="3" fill="#fff"/><rect x="0" y="27" width="2" height="2" fill="#222"/><rect x="0" y="30" width="3" height="3" fill="#fff"/><rect x="0" y="30" width="2" height="2" fill="#222"/><rect x="0" y="33" width="3" height="3" fill="#fff"/><rect x="0" y="33" width="2" height="2" fill="#222"/></svg>
<svg class="r" style="left:302.5px;top:189.5px" width="16" height="16" viewBox="0 0 16 16"><path d="M2 4.5 L2 2 L4.5 2 M7 2 L9.5 2 M12 2 L14.5 2 L14.5 4.5 M14.5 7 L14.5 9.5 M14.5 12 L14.5 14.5 L12 14.5 M9.5 14.5 L7 14.5 M4.5 14.5 L2 14.5 L2 12 M2 9.5 L2 7" fill="none" stroke="#111" stroke-width="1.5"/><circle cx="8.2" cy="8.2" r="2.5" fill="#111"/></svg><svg class="r" style="left:326.0px;top:189.5px" width="16" height="16" viewBox="0 0 16 16"><rect x="0.5" y="0.5" width="15" height="15" fill="#f4f8fc" stroke="#8aaed4"/><path d="M3 3 L13 3 L13 13 L3 13 Z" fill="none" stroke="#3f86c8" stroke-width="1"/><path d="M3 3 L6 6 M13 3 L10 6 M3 13 L6 10 M13 13 L10 10" stroke="#3f86c8" stroke-width="1.3"/><circle cx="8" cy="8" r="2.8" fill="#fff" stroke="#3f86c8" stroke-width="1.2"/></svg><svg class="r" style="left:349.0px;top:189.5px" width="16" height="16" viewBox="0 0 16 16"><path d="M1 5 L8 8 L8 15.5 L1 12.5 Z" fill="#e0182c" stroke="#111" stroke-width="1"/><path d="M8 8 L15 5 L15 12.5 L8 15.5 Z" fill="#fff" stroke="#111" stroke-width="1"/><path d="M1 5 L8 2 L15 5 L8 8 Z" fill="#fff" stroke="#111" stroke-width="1"/></svg><svg class="r" style="left:372.0px;top:189.5px" width="16" height="16" viewBox="0 0 16 16"><path d="M1 5 L8 8 L8 15.5 L1 12.5 Z" fill="#fff" stroke="#111" stroke-width="1"/><path d="M8 8 L15 5 L15 12.5 L8 15.5 Z" fill="#fff" stroke="#111" stroke-width="1"/><path d="M1 5 L8 2 L15 5 L8 8 Z" fill="#e0182c" stroke="#111" stroke-width="1"/></svg><svg class="r" style="left:395.0px;top:189.5px" width="16" height="16" viewBox="0 0 16 16"><path d="M1 5 L8 8 L8 15.5 L1 12.5 Z" fill="#fff" stroke="#111" stroke-width="1"/><path d="M8 8 L15 5 L15 12.5 L8 15.5 Z" fill="#e0182c" stroke="#111" stroke-width="1"/><path d="M1 5 L8 2 L15 5 L8 8 Z" fill="#fff" stroke="#111" stroke-width="1"/></svg><svg class="r" style="left:418.5px;top:189.5px" width="16" height="16" viewBox="0 0 16 16"><path d="M1 9 L7 7.5 L7 14 L1 15.5 Z" fill="#fff" stroke="#111"/><path d="M7 7.5 L15 2 L15 7.5 L7 14 Z" fill="#fff" stroke="#111"/><path d="M1 9 L10 3 L15 2 L7 7.5 Z" fill="#fff" stroke="#111"/></svg><svg class="r" style="left:448.5px;top:189.5px" width="16" height="16" viewBox="0 0 16 16"><rect x="0.7" y="0.7" width="13" height="12.6" fill="#fff" stroke="#e0182c" stroke-width="1.4"/><circle cx="7" cy="7" r="4.3" fill="#eef4fb" stroke="#6a7f9a" stroke-width="1.2"/><path d="M7 3 L7 11 M3 7 L11 7" stroke="#6a7f9a" stroke-width="0.9"/><path d="M10.5 10.5 L15 15" stroke="#888" stroke-width="1.4"/></svg><svg class="r" style="left:471.5px;top:189.5px" width="16" height="16" viewBox="0 0 16 16"><circle cx="7" cy="6.5" r="4.6" fill="#e6effa" stroke="#8aa0bd" stroke-width="1.3"/><rect x="4" y="5.5" width="6" height="2.2" fill="#1c3fb0"/><path d="M10.5 10 L14 14" stroke="#999" stroke-width="1.6"/></svg><svg class="r" style="left:495.0px;top:189.5px" width="16" height="16" viewBox="0 0 16 16"><path d="M2 14 L12 4 M4 13.5 L13 4.5" stroke="#111" stroke-width="1" fill="none"/><path d="M7 2.5 L14 2 L13.5 9 Z" fill="#fff" stroke="#111" stroke-width="1"/></svg><svg class="r" style="left:517.5px;top:189.5px" width="16" height="16" viewBox="0 0 16 16"><path d="M7.5 10.5 C3 10.5 1.5 8.5 1.5 7 C1.5 4.5 4.5 3.5 8 3.5 C11.5 3.5 14.5 4.8 14.5 7 C14.5 8.2 13.5 9 12.5 9.5" fill="none" stroke="#111" stroke-width="2.2"/><path d="M8.5 9 L13.5 9.5 L11 14 Z" fill="#111"/></svg><svg class="r" style="left:540.5px;top:189.5px" width="16" height="16" viewBox="0 0 16 16"><circle cx="8" cy="8" r="6" fill="none" stroke="#9a9a9a" stroke-width="1"/><circle cx="8" cy="8" r="3.2" fill="none" stroke="#9a9a9a" stroke-width="1"/><path d="M8 0.5 L8 15.5 M0.5 8 L15.5 8" stroke="#9a9a9a" stroke-width="1"/><circle cx="8" cy="8" r="1.2" fill="#777"/></svg><svg class="r" style="left:572.0px;top:189.5px" width="16" height="16" viewBox="0 0 16 16"><circle cx="8" cy="8" r="7.3" fill="#b9b9b9" stroke="#a2a2a2"/><path d="M12.5 8 L4.5 8 M8 4 L4 8 L8 12" stroke="#e9e9e9" stroke-width="2" fill="none"/></svg><svg class="r" style="left:595.0px;top:189.5px" width="16" height="16" viewBox="0 0 16 16"><circle cx="8" cy="8" r="7.3" fill="#b9b9b9" stroke="#a2a2a2"/><path d="M3.5 8 L11.5 8 M8 4 L12 8 L8 12" stroke="#e9e9e9" stroke-width="2" fill="none"/></svg><svg class="r" style="left:618.0px;top:189.5px" width="16" height="16" viewBox="0 0 16 16"><path d="M1 4 L1 1 L4 1 M12 1 L15 1 L15 4 M1 12 L1 15 L4 15" stroke="#3fa9f5" stroke-width="1.3" fill="none"/><path d="M8 3 L12 5 L12 9.5 L8 11.5 L4 9.5 L4 5 Z M4 5 L8 7 L12 5 M8 7 L8 11.5" fill="#d6ecfc" stroke="#3fa9f5" stroke-width="1"/><rect x="9" y="10" width="6.5" height="5" rx="1" fill="#2b8fe0"/><circle cx="12.2" cy="12.6" r="1.4" fill="#d6ecfc"/></svg><svg class="r" style="left:641.0px;top:189.5px" width="16" height="16" viewBox="0 0 16 16"><path d="M1 4 L1 1 L4 1 M12 1 L15 1 L15 4 M1 12 L1 15 L4 15" stroke="#3fa9f5" stroke-width="1.3" fill="none"/><path d="M8 3 L12 5 L12 9.5 L8 11.5 L4 9.5 L4 5 Z M4 5 L8 7 L12 5 M8 7 L8 11.5" fill="#d6ecfc" stroke="#3fa9f5" stroke-width="1"/><rect x="9" y="9.5" width="6.5" height="6" fill="#d6ecfc" stroke="#2b8fe0"/><path d="M9 11.5 L15.5 11.5 M9 13.5 L15.5 13.5 M11.2 9.5 L11.2 15.5 M13.4 9.5 L13.4 15.5" stroke="#2b8fe0" stroke-width="0.7"/></svg><svg class="r" style="left:671.5px;top:189.5px" width="16" height="16" viewBox="0 0 16 16"><path d="M6 1.5 L15.5 1.5 M7.5 3.5 L15.5 3.5 M9 5.5 L15.5 5.5 M10.5 7.5 L15.5 7.5" stroke="#128a2a" stroke-width="1.3"/><path d="M6 3 L15 3 M8 5 L15 5 M9.5 7 L15 7" stroke="#d8c020" stroke-width="0.6"/><path d="M1.5 1 L1.5 12.5 L4.3 10 L6.3 14.8 L8.3 13.9 L6.3 9.3 L10 9.3 Z" fill="#fff" stroke="#111" stroke-width="1"/></svg><svg class="r" style="left:703.0px;top:189.5px" width="16" height="16" viewBox="0 0 16 16"><path d="M1 2.5 C1 1 3 0.5 4 1.5 L9 1.5 L9 12 L4 12 C3 13 1 12.5 1 11 Z" fill="#f7cf4a" stroke="#c79a1c" stroke-width="1"/><circle cx="8.8" cy="7" r="4" fill="#d9ecfb" stroke="#4a8fd0" stroke-width="1.4"/><path d="M11.5 10 L15 14.5" stroke="#d98a2c" stroke-width="2.2" stroke-linecap="round"/></svg><svg class="r" style="left:734.0px;top:189.5px" width="16" height="16" viewBox="0 0 16 16"><path d="M1 4.5 L4.5 4.5 L5.8 2.5 L10.2 2.5 L11.5 4.5 L15 4.5 L15 13.5 L1 13.5 Z" fill="#111"/><circle cx="8" cy="8.8" r="3.1" fill="#fff"/><circle cx="8" cy="8.8" r="1.9" fill="#111"/></svg><svg class="r" style="left:757.0px;top:189.5px" width="16" height="16" viewBox="0 0 16 16"><g transform="translate(1.5,-1)"><path d="M1 4.5 L4.5 4.5 L5.8 2.5 L10.2 2.5 L11.5 4.5 L15 4.5 L15 13.5 L1 13.5 Z" fill="#111"/><circle cx="8" cy="8.8" r="3.1" fill="#fff"/><circle cx="8" cy="8.8" r="1.9" fill="#111"/></g><path d="M0.5 6.5 L4.5 6.5 L6 8 L6 15.5 L0.5 15.5 Z" fill="#f3d36a" stroke="#c9a52c" stroke-width="0.8"/></svg>
<div class="r" style="left:440.5px;top:190px;width:1px;height:17px;background:#8e8e8e"></div><div class="r" style="left:441.5px;top:190px;width:1px;height:17px;background:#fff"></div><div class="r" style="left:563.5px;top:190px;width:1px;height:17px;background:#8e8e8e"></div><div class="r" style="left:564.5px;top:190px;width:1px;height:17px;background:#fff"></div><div class="r" style="left:663.5px;top:190px;width:1px;height:17px;background:#8e8e8e"></div><div class="r" style="left:664.5px;top:190px;width:1px;height:17px;background:#fff"></div><div class="r" style="left:694.5px;top:190px;width:1px;height:17px;background:#8e8e8e"></div><div class="r" style="left:695.5px;top:190px;width:1px;height:17px;background:#fff"></div><div class="r" style="left:725.5px;top:190px;width:1px;height:17px;background:#8e8e8e"></div><div class="r" style="left:726.5px;top:190px;width:1px;height:17px;background:#fff"></div>
<div class="r" style="left:298px;top:211px;width:1023px;height:317px;background:#000;"></div>
<div class="r" style="left:1321px;top:211px;width:16px;height:317px;background:#f0f0f0;"></div>
<div class="r" style="left:1329px;top:228px;width:2px;height:283px;background:#8a8a8a;border-radius:1px;"></div>
<div class="r" style="left:298px;top:528px;width:1039px;height:18px;background:#f0f0f0;"></div>
<div class="r" style="left:470px;top:536px;width:560px;height:2px;background:#8a8a8a;border-radius:1px;"></div>
<svg class="r" style="left:0;top:0" width="1339" height="856" viewBox="0 0 1339 856"><defs><clipPath id="cv"><rect x="298" y="211" width="1023" height="317"/></clipPath><linearGradient id="eg0" gradientUnits="userSpaceOnUse" x1="676.6" y1="513.6" x2="676.6" y2="380.7"><stop offset="0" stop-color="#4fb4f4"/><stop offset="1" stop-color="#f07ac4"/></linearGradient><linearGradient id="eg1" gradientUnits="userSpaceOnUse" x1="676.6" y1="380.7" x2="681.6" y2="345.9"><stop offset="0" stop-color="#4fb4f4"/><stop offset="1" stop-color="#f07ac4"/></linearGradient><linearGradient id="eg2" gradientUnits="userSpaceOnUse" x1="681.6" y1="345.9" x2="694.3" y2="313.9"><stop offset="0" stop-color="#4fb4f4"/><stop offset="1" stop-color="#f07ac4"/></linearGradient><linearGradient id="eg3" gradientUnits="userSpaceOnUse" x1="694.3" y1="313.9" x2="715.5" y2="286.7"><stop offset="0" stop-color="#4fb4f4"/><stop offset="1" stop-color="#f07ac4"/></linearGradient><linearGradient id="eg4" gradientUnits="userSpaceOnUse" x1="715.5" y1="286.7" x2="742.9" y2="265.8"><stop offset="0" stop-color="#4fb4f4"/><stop offset="1" stop-color="#f07ac4"/></linearGradient><linearGradient id="eg5" gradientUnits="userSpaceOnUse" x1="742.9" y1="265.8" x2="775.5" y2="252.9"><stop offset="0" stop-color="#4fb4f4"/><stop offset="1" stop-color="#f07ac4"/></linearGradient><linearGradient id="eg6" gradientUnits="userSpaceOnUse" x1="775.5" y1="252.9" x2="809.4" y2="248"><stop offset="0" stop-color="#4fb4f4"/><stop offset="1" stop-color="#f07ac4"/></linearGradient><linearGradient id="eg7" gradientUnits="userSpaceOnUse" x1="809.4" y1="248" x2="843.2" y2="252.9"><stop offset="0" stop-color="#4fb4f4"/><stop offset="1" stop-color="#f07ac4"/></linearGradient><linearGradient id="eg8" gradientUnits="userSpaceOnUse" x1="843.2" y1="252.9" x2="876" y2="265.8"><stop offset="0" stop-color="#4fb4f4"/><stop offset="1" stop-color="#f07ac4"/></linearGradient><linearGradient id="eg9" gradientUnits="userSpaceOnUse" x1="876" y1="265.8" x2="903.5" y2="286.7"><stop offset="0" stop-color="#4fb4f4"/><stop offset="1" stop-color="#f07ac4"/></linearGradient><linearGradient id="eg10" gradientUnits="userSpaceOnUse" x1="903.5" y1="286.7" x2="924.4" y2="313.9"><stop offset="0" stop-color="#4fb4f4"/><stop offset="1" stop-color="#f07ac4"/></linearGradient><linearGradient id="eg11" gradientUnits="userSpaceOnUse" x1="924.4" y1="313.9" x2="937.3" y2="345.9"><stop offset="0" stop-color="#4fb4f4"/><stop offset="1" stop-color="#f07ac4"/></linearGradient><linearGradient id="eg12" gradientUnits="userSpaceOnUse" x1="937.3" y1="345.9" x2="942.1" y2="380.7"><stop offset="0" stop-color="#4fb4f4"/><stop offset="1" stop-color="#f07ac4"/></linearGradient><linearGradient id="eg13" gradientUnits="userSpaceOnUse" x1="942.1" y1="380.7" x2="942.1" y2="513.6"><stop offset="0" stop-color="#4fb4f4"/><stop offset="1" stop-color="#f07ac4"/></linearGradient></defs><g clip-path="url(#cv)"><path d="M638.5 211 L638.5 528" stroke="#404040" stroke-width="1" shape-rendering="crispEdges"/><path d="M676.5 211 L676.5 528" stroke="#404040" stroke-width="1" shape-rendering="crispEdges"/><path d="M714.5 211 L714.5 528" stroke="#404040" stroke-width="1" shape-rendering="crispEdges"/><path d="M752.5 211 L752.5 528" stroke="#404040" stroke-width="1" shape-rendering="crispEdges"/><path d="M790.5 211 L790.5 528" stroke="#404040" stroke-width="1" shape-rendering="crispEdges"/><path d="M828.5 211 L828.5 528" stroke="#404040" stroke-width="1" shape-rendering="crispEdges"/><path d="M866.5 211 L866.5 528" stroke="#404040" stroke-width="1" shape-rendering="crispEdges"/><path d="M904.5 211 L904.5 528" stroke="#404040" stroke-width="1" shape-rendering="crispEdges"/><path d="M942.5 211 L942.5 528" stroke="#404040" stroke-width="1" shape-rendering="crispEdges"/><path d="M980.5 211 L980.5 528" stroke="#404040" stroke-width="1" shape-rendering="crispEdges"/><path d="M638 248.5 L981 248.5" stroke="#404040" stroke-width="1" shape-rendering="crispEdges"/><path d="M638 286.5 L981 286.5" stroke="#404040" stroke-width="1" shape-rendering="crispEdges"/><path d="M638 324.5 L981 324.5" stroke="#404040" stroke-width="1" shape-rendering="crispEdges"/><path d="M638 362.5 L981 362.5" stroke="#404040" stroke-width="1" shape-rendering="crispEdges"/><path d="M638 400.5 L981 400.5" stroke="#404040" stroke-width="1" shape-rendering="crispEdges"/><path d="M638 438.5 L981 438.5" stroke="#404040" stroke-width="1" shape-rendering="crispEdges"/><path d="M638 475.5 L981 475.5" stroke="#404040" stroke-width="1" shape-rendering="crispEdges"/><path d="M638 513.5 L981 513.5" stroke="#404040" stroke-width="1" shape-rendering="crispEdges"/><path d="M298 405.5 L1321 405.5 M911.5 211 L911.5 528" stroke="#a8a830" stroke-width="1" shape-rendering="crispEdges"/><path d="M676.6 513.6 L676.6 380.7" stroke="url(#eg0)" stroke-width="1.1"/><path d="M676.6 380.7 L681.6 345.9" stroke="url(#eg1)" stroke-width="1.1"/><path d="M681.6 345.9 L694.3 313.9" stroke="url(#eg2)" stroke-width="1.1"/><path d="M694.3 313.9 L715.5 286.7" stroke="url(#eg3)" stroke-width="1.1"/><path d="M715.5 286.7 L742.9 265.8" stroke="url(#eg4)" stroke-width="1.1"/><path d="M742.9 265.8 L775.5 252.9" stroke="url(#eg5)" stroke-width="1.1"/><path d="M775.5 252.9 L809.4 248" stroke="url(#eg6)" stroke-width="1.1"/><path d="M809.4 248 L843.2 252.9" stroke="url(#eg7)" stroke-width="1.1"/><path d="M843.2 252.9 L876 265.8" stroke="url(#eg8)" stroke-width="1.1"/><path d="M876 265.8 L903.5 286.7" stroke="url(#eg9)" stroke-width="1.1"/><path d="M903.5 286.7 L924.4 313.9" stroke="url(#eg10)" stroke-width="1.1"/><path d="M924.4 313.9 L937.3 345.9" stroke="url(#eg11)" stroke-width="1.1"/><path d="M937.3 345.9 L942.1 380.7" stroke="url(#eg12)" stroke-width="1.1"/><path d="M942.1 380.7 L942.1 513.6" stroke="url(#eg13)" stroke-width="1.1"/><path d="M676.6 513.6 C690 478 708.5 440 709 405 C709.2 396 708.3 388 707.7 380.7 C707 369 706.8 357 707.2 345.9 C707.8 333 709 322 711.5 311 C714 298 718 287 724.1 276.8 C730 266 737 256 746.2 248 C754 240.5 764 234 775.5 229.7 C786 225.5 797 223 809.4 223 C821 223 833 225.5 843.2 229.7 C854 234 864.5 240.5 872.8 248 C881 256 888.5 266 894.3 276.5 C900 287 904.5 298 907 310.6 C909.5 322 911.3 333 912 345.9 C912.5 357 911.5 369 910.6 380.7" stroke="#2fbcf5" stroke-width="2.2" fill="none"/><path d="M910.6 380.7 C910 390 909.6 399 910 408 C910.8 425 913 436 915.6 445 C922 470 933 492 942.1 513.6" stroke="#f5f520" stroke-width="5" fill="none"/><path d="M910.6 380.7 C910 390 909.6 399 910 408 C910.8 425 913 436 915.6 445 C922 470 933 492 942.1 513.6" stroke="#3fc4e8" stroke-width="1.3" fill="none"/><path d="M676.6 514 L668 526 L686 526 Z M660 520 L676 514 M662 523 L678 517 M664 526 L680 520 M660 526 L690 526" stroke="#e79ad8" stroke-width="0.9" fill="none"/><path d="M942.1 514 L934 526 L951 526 Z" stroke="#e79ad8" stroke-width="0.9" fill="none"/><rect x="704.5" y="438.5" width="9" height="13" fill="none" stroke="#30c0ff" stroke-width="1" shape-rendering="crispEdges"/><text x="709.0" y="450.0" font-size="13" fill="#30c0ff" text-anchor="middle" textLength="6" lengthAdjust="spacingAndGlyphs">1</text><rect x="708.5" y="368.5" width="9" height="13" fill="none" stroke="#30c0ff" stroke-width="1" shape-rendering="crispEdges"/><text x="713.0" y="380.0" font-size="13" fill="#30c0ff" text-anchor="middle" textLength="6" lengthAdjust="spacingAndGlyphs">2</text><rect x="709.5" y="333.5" width="9" height="13" fill="none" stroke="#30c0ff" stroke-width="1" shape-rendering="crispEdges"/><text x="714.0" y="345.0" font-size="13" fill="#30c0ff" text-anchor="middle" textLength="6" lengthAdjust="spacingAndGlyphs">3</text><rect x="717.5" y="299.5" width="9" height="13" fill="none" stroke="#30c0ff" stroke-width="1" shape-rendering="crispEdges"/><text x="722.0" y="311.0" font-size="13" fill="#30c0ff" text-anchor="middle" textLength="6" lengthAdjust="spacingAndGlyphs">4</text><rect x="734.5" y="267.5" width="9" height="13" fill="none" stroke="#30c0ff" stroke-width="1" shape-rendering="crispEdges"/><text x="739.0" y="279.0" font-size="13" fill="#30c0ff" text-anchor="middle" textLength="6" lengthAdjust="spacingAndGlyphs">5</text><rect x="760.5" y="244.5" width="9" height="13" fill="none" stroke="#30c0ff" stroke-width="1" shape-rendering="crispEdges"/><text x="765.0" y="256.0" font-size="13" fill="#30c0ff" text-anchor="middle" textLength="6" lengthAdjust="spacingAndGlyphs">6</text><rect x="792.5" y="230.5" width="9" height="13" fill="none" stroke="#30c0ff" stroke-width="1" shape-rendering="crispEdges"/><text x="797.0" y="242.0" font-size="13" fill="#30c0ff" text-anchor="middle" textLength="6" lengthAdjust="spacingAndGlyphs">7</text><rect x="826.5" y="230.5" width="9" height="13" fill="none" stroke="#30c0ff" stroke-width="1" shape-rendering="crispEdges"/><text x="831.0" y="242.0" font-size="13" fill="#30c0ff" text-anchor="middle" textLength="6" lengthAdjust="spacingAndGlyphs">8</text><rect x="858.5" y="244.5" width="9" height="13" fill="none" stroke="#30c0ff" stroke-width="1" shape-rendering="crispEdges"/><text x="863.0" y="256.0" font-size="13" fill="#30c0ff" text-anchor="middle" textLength="6" lengthAdjust="spacingAndGlyphs">9</text><rect x="883.5" y="268.5" width="16" height="13" fill="none" stroke="#30c0ff" stroke-width="1" shape-rendering="crispEdges"/><text x="891.5" y="280.0" font-size="13" fill="#30c0ff" text-anchor="middle" textLength="12" lengthAdjust="spacingAndGlyphs">10</text><rect x="900.5" y="299.5" width="16" height="13" fill="none" stroke="#30c0ff" stroke-width="1" shape-rendering="crispEdges"/><text x="908.5" y="311.0" font-size="13" fill="#30c0ff" text-anchor="middle" textLength="12" lengthAdjust="spacingAndGlyphs">11</text><rect x="909.5" y="333.5" width="16" height="13" fill="none" stroke="#30c0ff" stroke-width="1" shape-rendering="crispEdges"/><text x="917.5" y="345.0" font-size="13" fill="#30c0ff" text-anchor="middle" textLength="12" lengthAdjust="spacingAndGlyphs">12</text><rect x="910.5" y="368.5" width="16" height="13" fill="none" stroke="#30c0ff" stroke-width="1" shape-rendering="crispEdges"/><text x="918.5" y="380.0" font-size="13" fill="#30c0ff" text-anchor="middle" textLength="12" lengthAdjust="spacingAndGlyphs">13</text><rect x="914.5" y="438.5" width="16" height="13" fill="none" stroke="#30c0ff" stroke-width="1" shape-rendering="crispEdges"/><text x="922.5" y="450.0" font-size="13" fill="#30c0ff" text-anchor="middle" textLength="12" lengthAdjust="spacingAndGlyphs">14</text><path d="M671.0 513.6 L676.6 508.0 L682.2 513.6 L676.6 519.2 Z" fill="#1e5a1e"/><path d="M671.0 380.7 L676.6 375.1 L682.2 380.7 L676.6 386.3 Z" fill="#1e5a1e"/><path d="M676.0 345.9 L681.6 340.3 L687.2 345.9 L681.6 351.5 Z" fill="#1e5a1e"/><path d="M688.7 313.9 L694.3 308.3 L699.9 313.9 L694.3 319.5 Z" fill="#1e5a1e"/><path d="M709.9 286.7 L715.5 281.1 L721.1 286.7 L715.5 292.3 Z" fill="#1e5a1e"/><path d="M737.3 265.8 L742.9 260.2 L748.5 265.8 L742.9 271.4 Z" fill="#1e5a1e"/><path d="M769.9 252.9 L775.5 247.3 L781.1 252.9 L775.5 258.5 Z" fill="#1e5a1e"/><path d="M803.8 248.0 L809.4 242.4 L815.0 248.0 L809.4 253.6 Z" fill="#1e5a1e"/><path d="M837.6 252.9 L843.2 247.3 L848.8 252.9 L843.2 258.5 Z" fill="#1e5a1e"/><path d="M870.4 265.8 L876.0 260.2 L881.6 265.8 L876.0 271.4 Z" fill="#1e5a1e"/><path d="M897.9 286.7 L903.5 281.1 L909.1 286.7 L903.5 292.3 Z" fill="#1e5a1e"/><path d="M918.8 313.9 L924.4 308.3 L930.0 313.9 L924.4 319.5 Z" fill="#1e5a1e"/><path d="M931.7 345.9 L937.3 340.3 L942.9 345.9 L937.3 351.5 Z" fill="#1e5a1e"/><path d="M936.5 380.7 L942.1 375.1 L947.7 380.7 L942.1 386.3 Z" fill="#1e5a1e"/><path d="M936.5 513.6 L942.1 508.0 L947.7 513.6 L942.1 519.2 Z" fill="#1e5a1e"/><path d="M702.1 380.7 L707.7 375.1 L713.3 380.7 L707.7 386.3 Z" fill="#1e5a1e"/><path d="M701.6 345.9 L707.2 340.3 L712.8 345.9 L707.2 351.5 Z" fill="#1e5a1e"/><path d="M705.9 311.0 L711.5 305.4 L717.1 311.0 L711.5 316.6 Z" fill="#1e5a1e"/><path d="M718.5 276.8 L724.1 271.2 L729.7 276.8 L724.1 282.4 Z" fill="#1e5a1e"/><path d="M740.6 248.0 L746.2 242.4 L751.8 248.0 L746.2 253.6 Z" fill="#1e5a1e"/><path d="M769.9 229.7 L775.5 224.1 L781.1 229.7 L775.5 235.3 Z" fill="#1e5a1e"/><path d="M803.8 223.0 L809.4 217.4 L815.0 223.0 L809.4 228.6 Z" fill="#1e5a1e"/><path d="M837.6 229.7 L843.2 224.1 L848.8 229.7 L843.2 235.3 Z" fill="#1e5a1e"/><path d="M867.2 248.0 L872.8 242.4 L878.4 248.0 L872.8 253.6 Z" fill="#1e5a1e"/><path d="M888.7 276.5 L894.3 270.9 L899.9 276.5 L894.3 282.1 Z" fill="#1e5a1e"/><path d="M901.4 310.6 L907.0 305.0 L912.6 310.6 L907.0 316.2 Z" fill="#1e5a1e"/><path d="M906.4 345.9 L912.0 340.3 L917.6 345.9 L912.0 351.5 Z" fill="#1e5a1e"/><path d="M905.0 380.7 L910.6 375.1 L916.2 380.7 L910.6 386.3 Z" fill="#1e5a1e"/><path d="M358.2 468.6 L358.2 433" stroke="#10a010" stroke-width="2"/><path d="M355 438 L358.2 429 L361.4 438 Z" fill="#10a010"/><path d="M358.2 467.8 L392 467.8" stroke="#0a96ff" stroke-width="2"/><path d="M388 464.8 L397 467.8 L388 470.8 Z" fill="#0a96ff"/><text x="353.8" y="421.8" font-size="14" fill="#10a010" text-anchor="middle" textLength="8" lengthAdjust="spacingAndGlyphs">Y</text><text x="402" y="486" font-size="14" fill="#0a96ff" text-anchor="middle" textLength="8" lengthAdjust="spacingAndGlyphs">X</text><path d="M339 496.5 A11.8 11.8 0 1 1 338 509.5" fill="none" stroke="#9a9a9a" stroke-width="1"/><path d="M348.6 503.6 L348.6 484 M353.5 503.6 L369 503.6" stroke="#9a9a9a" stroke-width="1"/><path d="M346 487 L348.6 481 L351.2 487 Z M366.5 501 L372.5 503.6 L366.5 506.2 Z M336 494 L341 493.2 L339.5 498 Z" fill="#9a9a9a"/><path d="M346.2 503.6 L348.6 501.2 L351.0 503.6 L348.6 506.0 Z" fill="#18a018"/><text x="314.7" y="508.3" font-size="12" fill="#9a9a9a" textLength="21.5" lengthAdjust="spacingAndGlyphs">+θZ</text><text x="364.4" y="517" font-size="12" fill="#9a9a9a" textLength="22" lengthAdjust="spacingAndGlyphs">+δX</text></g></svg>
<span class="t " style="left:304px;top:219.0px;font-size:14px;line-height:18px;color:#c000ff;font-weight:bold;transform:scaleX(1.0000);transform-origin:left;">変位</span>
<span class="t " style="left:331px;top:238.5px;font-size:11px;line-height:15px;color:#c000ff;font-weight:bold;transform:scaleX(1.0938);transform-origin:left;">荷重-1</span>
<span class="t " style="left:1244px;top:217.5px;font-size:12px;line-height:16px;color:#ff0000;transform:scaleX(1.0286);transform-origin:left;">X 64.6</span>
<span class="t " style="left:1285px;top:214.5px;font-size:16px;line-height:20px;color:#ff0000;transform:scaleX(0.9688);transform-origin:left;">倍率</span>
<div class="r" style="left:298px;top:545px;width:1039px;height:6px;background:#c8c8c8;"></div>
<div class="r" style="left:298px;top:551px;width:1039px;height:282px;background:#f0f0f0;"></div>
<div class="r" style="left:298px;top:551px;width:1039px;height:22px;background:#fff;"></div>
<div class="r" style="left:298px;top:551px;width:3px;height:22px;background:#f0f0f0;"></div>
<div class="r" style="left:300.5px;top:552.5px;width:40px;height:20px;background:#f0f0f0;border:1px solid #e2e2e2;"></div>
<div class="r" style="left:340px;top:551px;width:77px;height:23px;background:#f9f9f9;border:1px solid #e2e2e2;border-bottom:none;"></div>
<span class="t " style="left:305px;top:554.5px;font-size:12px;line-height:16px;color:#000;transform:scaleX(1.0000);transform-origin:left;">節点</span>
<span class="t " style="left:347px;top:554.5px;font-size:12px;line-height:16px;color:#000;transform:scaleX(0.8611);transform-origin:left;">フレーム要素</span>
<div class="r" style="left:302px;top:572.5px;width:1035px;height:259px;background:#fff;border-top:1px solid #e2e2e2;border-left:1px solid #e2e2e2;"></div>
<div class="r" style="left:341px;top:572px;width:75px;height:2px;background:#f9f9f9;"></div>
<div class="r" style="left:304px;top:578px;width:391px;height:20px;background:#f0f0f0;border:1px solid #b8b8b8;"></div>
<div class="r" style="left:368.0px;top:578px;width:1px;height:252px;background:#c4c4c4;"></div>
<div class="r" style="left:499.0px;top:578px;width:1px;height:252px;background:#c4c4c4;"></div>
<div class="r" style="left:564.0px;top:578px;width:1px;height:252px;background:#c4c4c4;"></div>
<div class="r" style="left:629.0px;top:578px;width:1px;height:252px;background:#c4c4c4;"></div>
<div class="r" style="left:304px;top:598px;width:1px;height:232px;background:#c4c4c4;"></div>
<div class="r" style="left:694px;top:598px;width:1px;height:232px;background:#c4c4c4;"></div>
<div class="r" style="left:304px;top:618.5px;width:391px;height:1px;background:#c4c4c4;"></div>
<div class="r" style="left:304px;top:639.5px;width:391px;height:1px;background:#c4c4c4;"></div>
<div class="r" style="left:304px;top:660.5px;width:391px;height:1px;background:#c4c4c4;"></div>
<div class="r" style="left:304px;top:681.5px;width:391px;height:1px;background:#c4c4c4;"></div>
<div class="r" style="left:304px;top:702.5px;width:391px;height:1px;background:#c4c4c4;"></div>
<div class="r" style="left:304px;top:723.5px;width:391px;height:1px;background:#c4c4c4;"></div>
<div class="r" style="left:304px;top:744.5px;width:391px;height:1px;background:#c4c4c4;"></div>
<div class="r" style="left:304px;top:765.5px;width:391px;height:1px;background:#c4c4c4;"></div>
<div class="r" style="left:304px;top:786.5px;width:391px;height:1px;background:#c4c4c4;"></div>
<div class="r" style="left:304px;top:807.5px;width:391px;height:1px;background:#c4c4c4;"></div>
<div class="r" style="left:304px;top:828.5px;width:391px;height:1px;background:#c4c4c4;"></div>
<div class="r" style="left:304px;top:597px;width:391px;height:1.5px;background:#a8a8a8;"></div>
<span class="t " style="left:308.5px;top:580.5px;font-size:12px;line-height:16px;color:#111;transform:scaleX(1.0000);transform-origin:left;">名称</span>
<span class="t " style="left:372.5px;top:580.5px;font-size:12px;line-height:16px;color:#111;transform:scaleX(0.8723);transform-origin:left;">ケース名</span>
<span class="t " style="left:503.5px;top:580.5px;font-size:12px;line-height:16px;color:#111;transform:scaleX(1.0690);transform-origin:left;">X (m)</span>
<span class="t " style="left:568.5px;top:580.5px;font-size:12px;line-height:16px;color:#111;transform:scaleX(1.0435);transform-origin:left;">δX (mm)</span>
<span class="t " style="left:633.5px;top:580.5px;font-size:12px;line-height:16px;color:#111;transform:scaleX(1.0435);transform-origin:left;">δY (mm)</span>
<div class="r" style="left:305px;top:598.5px;width:63px;height:20px;background:#0078d7;"></div>
<span class="t " style="left:307.5px;top:600.5px;font-size:12px;line-height:16px;color:#fff;transform:scaleX(0.8571);transform-origin:left;">1</span>
<span class="t " style="left:372.5px;top:600.5px;font-size:12px;line-height:16px;color:#000;transform:scaleX(1.0000);transform-origin:left;">荷重-1</span>
<span class="t " style="left:503.5px;top:600.5px;font-size:12px;line-height:16px;color:#000;transform:scaleX(1.0333);transform-origin:left;">0.000</span>
<span class="t " style="left:568.5px;top:600.5px;font-size:12px;line-height:16px;color:#000;transform:scaleX(1.0533);transform-origin:left;">0.00000</span>
<span class="t " style="left:633.5px;top:600.5px;font-size:12px;line-height:16px;color:#000;transform:scaleX(1.0533);transform-origin:left;">0.00000</span>
<span class="t " style="left:307.5px;top:621.5px;font-size:12px;line-height:16px;color:#000;transform:scaleX(0.8571);transform-origin:left;">1</span>
<span class="t " style="left:372.5px;top:621.5px;font-size:12px;line-height:16px;color:#000;transform:scaleX(1.0000);transform-origin:left;">荷重-1</span>
<span class="t " style="left:503.5px;top:621.5px;font-size:12px;line-height:16px;color:#000;transform:scaleX(1.0333);transform-origin:left;">0.700</span>
<span class="t " style="left:568.5px;top:621.5px;font-size:12px;line-height:16px;color:#000;transform:scaleX(1.0533);transform-origin:left;">4.83570</span>
<span class="t " style="left:633.5px;top:621.5px;font-size:12px;line-height:16px;color:#000;transform:scaleX(1.0587);transform-origin:left;">-0.02369</span>
<span class="t " style="left:307.5px;top:642.5px;font-size:12px;line-height:16px;color:#000;transform:scaleX(0.8571);transform-origin:left;">1</span>
<span class="t " style="left:372.5px;top:642.5px;font-size:12px;line-height:16px;color:#000;transform:scaleX(1.0000);transform-origin:left;">荷重-1</span>
<span class="t " style="left:503.5px;top:642.5px;font-size:12px;line-height:16px;color:#000;transform:scaleX(1.0333);transform-origin:left;">1.400</span>
<span class="t " style="left:568.5px;top:642.5px;font-size:12px;line-height:16px;color:#000;transform:scaleX(1.0533);transform-origin:left;">8.90872</span>
<span class="t " style="left:633.5px;top:642.5px;font-size:12px;line-height:16px;color:#000;transform:scaleX(1.0587);transform-origin:left;">-0.04739</span>
<span class="t " style="left:307.5px;top:663.5px;font-size:12px;line-height:16px;color:#000;transform:scaleX(0.8571);transform-origin:left;">1</span>
<span class="t " style="left:372.5px;top:663.5px;font-size:12px;line-height:16px;color:#000;transform:scaleX(1.0000);transform-origin:left;">荷重-1</span>
<span class="t " style="left:503.5px;top:663.5px;font-size:12px;line-height:16px;color:#000;transform:scaleX(1.0333);transform-origin:left;">2.100</span>
<span class="t " style="left:568.5px;top:663.5px;font-size:12px;line-height:16px;color:#000;transform:scaleX(1.0563);transform-origin:left;">11.71309</span>
<span class="t " style="left:633.5px;top:663.5px;font-size:12px;line-height:16px;color:#000;transform:scaleX(1.0587);transform-origin:left;">-0.07108</span>
<span class="t " style="left:307.5px;top:684.5px;font-size:12px;line-height:16px;color:#000;transform:scaleX(0.8571);transform-origin:left;">1</span>
<span class="t " style="left:372.5px;top:684.5px;font-size:12px;line-height:16px;color:#000;transform:scaleX(1.0000);transform-origin:left;">荷重-1</span>
<span class="t " style="left:503.5px;top:684.5px;font-size:12px;line-height:16px;color:#000;transform:scaleX(1.0333);transform-origin:left;">2.473</span>
<span class="t " style="left:568.5px;top:684.5px;font-size:12px;line-height:16px;color:#000;transform:scaleX(1.0352);transform-origin:left;">12.59520</span>
<span class="t " style="left:633.5px;top:684.5px;font-size:12px;line-height:16px;color:#000;transform:scaleX(1.0587);transform-origin:left;">-0.08372</span>
<span class="t " style="left:307.5px;top:705.5px;font-size:12px;line-height:16px;color:#000;transform:scaleX(0.8571);transform-origin:left;">1</span>
<span class="t " style="left:372.5px;top:705.5px;font-size:12px;line-height:16px;color:#000;transform:scaleX(1.0000);transform-origin:left;">荷重-1</span>
<span class="t " style="left:503.5px;top:705.5px;font-size:12px;line-height:16px;color:#000;transform:scaleX(1.0333);transform-origin:left;">2.800</span>
<span class="t " style="left:568.5px;top:705.5px;font-size:12px;line-height:16px;color:#000;transform:scaleX(1.0352);transform-origin:left;">13.00207</span>
<span class="t " style="left:633.5px;top:705.5px;font-size:12px;line-height:16px;color:#000;transform:scaleX(1.0587);transform-origin:left;">-0.09478</span>
<span class="t " style="left:307.5px;top:726.5px;font-size:12px;line-height:16px;color:#000;transform:scaleX(0.8571);transform-origin:left;">1</span>
<span class="t " style="left:372.5px;top:726.5px;font-size:12px;line-height:16px;color:#000;transform:scaleX(1.0000);transform-origin:left;">荷重-1</span>
<span class="t " style="left:503.5px;top:726.5px;font-size:12px;line-height:16px;color:#000;transform:scaleX(1.0333);transform-origin:left;">3.500</span>
<span class="t " style="left:568.5px;top:726.5px;font-size:12px;line-height:16px;color:#000;transform:scaleX(1.0352);transform-origin:left;">12.76528</span>
<span class="t " style="left:633.5px;top:726.5px;font-size:12px;line-height:16px;color:#000;transform:scaleX(1.0817);transform-origin:left;">-0.11847</span>
<span class="t " style="left:307.5px;top:747.5px;font-size:12px;line-height:16px;color:#000;transform:scaleX(0.8571);transform-origin:left;">2</span>
<span class="t " style="left:372.5px;top:747.5px;font-size:12px;line-height:16px;color:#000;transform:scaleX(1.0000);transform-origin:left;">荷重-1</span>
<span class="t " style="left:503.5px;top:747.5px;font-size:12px;line-height:16px;color:#000;transform:scaleX(1.0333);transform-origin:left;">0.000</span>
<span class="t " style="left:568.5px;top:747.5px;font-size:12px;line-height:16px;color:#000;transform:scaleX(1.0352);transform-origin:left;">12.76528</span>
<span class="t " style="left:633.5px;top:747.5px;font-size:12px;line-height:16px;color:#000;transform:scaleX(1.0817);transform-origin:left;">-0.11847</span>
<span class="t " style="left:307.5px;top:768.5px;font-size:12px;line-height:16px;color:#000;transform:scaleX(0.8571);transform-origin:left;">2</span>
<span class="t " style="left:372.5px;top:768.5px;font-size:12px;line-height:16px;color:#000;transform:scaleX(1.0000);transform-origin:left;">荷重-1</span>
<span class="t " style="left:503.5px;top:768.5px;font-size:12px;line-height:16px;color:#000;transform:scaleX(1.0333);transform-origin:left;">0.457</span>
<span class="t " style="left:568.5px;top:768.5px;font-size:12px;line-height:16px;color:#000;transform:scaleX(1.0563);transform-origin:left;">11.87954</span>
<span class="t " style="left:633.5px;top:768.5px;font-size:12px;line-height:16px;color:#000;transform:scaleX(1.0587);transform-origin:left;">-0.01910</span>
<span class="t " style="left:307.5px;top:789.5px;font-size:12px;line-height:16px;color:#000;transform:scaleX(0.8571);transform-origin:left;">2</span>
<span class="t " style="left:372.5px;top:789.5px;font-size:12px;line-height:16px;color:#000;transform:scaleX(1.0000);transform-origin:left;">荷重-1</span>
<span class="t " style="left:503.5px;top:789.5px;font-size:12px;line-height:16px;color:#000;transform:scaleX(1.0333);transform-origin:left;">0.914</span>
<span class="t " style="left:568.5px;top:789.5px;font-size:12px;line-height:16px;color:#000;transform:scaleX(1.0352);transform-origin:left;">10.51700</span>
<span class="t " style="left:633.5px;top:789.5px;font-size:12px;line-height:16px;color:#000;transform:scaleX(1.0533);transform-origin:left;">0.14271</span>
<span class="t " style="left:307.5px;top:810.5px;font-size:12px;line-height:16px;color:#000;transform:scaleX(0.8571);transform-origin:left;">3</span>
<span class="t " style="left:372.5px;top:810.5px;font-size:12px;line-height:16px;color:#000;transform:scaleX(1.0000);transform-origin:left;">荷重-1</span>
<span class="t " style="left:503.5px;top:810.5px;font-size:12px;line-height:16px;color:#000;transform:scaleX(1.0333);transform-origin:left;">0.000</span>
<span class="t " style="left:568.5px;top:810.5px;font-size:12px;line-height:16px;color:#000;transform:scaleX(1.0352);transform-origin:left;">10.51700</span>
<span class="t " style="left:633.5px;top:810.5px;font-size:12px;line-height:16px;color:#000;transform:scaleX(1.0533);transform-origin:left;">0.14271</span>
<div class="r" style="left:1325px;top:551px;width:13px;height:281px;background:#d9d9d9;"></div>
<div class="r" style="left:1332px;top:573px;width:1px;height:258px;background:#c4c4c4;"></div>
<div class="r" style="left:1325px;top:832px;width:13px;height:21px;background:#cfcfcf;"></div>
<div class="r" style="left:751px;top:519px;width:574px;height:330.5px;background:#f0f0f0;border-radius:8px 8px 5px 5px;box-shadow:0 2px 10px 2px rgba(0,0,0,0.35),0 0 0 1px rgba(90,90,90,0.55);"></div>
<div class="r" style="left:751px;top:519px;width:574px;height:30px;background:#eef1f9;border-top-left-radius:8px;border-top-right-radius:8px;"></div>
<svg class="r" style="left:759px;top:525px;" width="16" height="16" viewBox="0 0 16 16"><defs><clipPath id="ai2"><rect width="16" height="16"/></clipPath></defs><g clip-path="url(#ai2)"><rect x="0" y="0" width="16" height="16" fill="#2a2016"/>
<ellipse cx="6.5" cy="16" rx="10.5" ry="11.5" fill="#f0c68c"/>
<path d="M0.5 0 L2 0 L7 3.5 L2.5 5.5 L1.5 6 L0.5 6 Z" fill="#d8d8dc"/><rect x="3" y="4.5" width="2" height="2" fill="#f4e800"/>
<text x="0.8" y="15.3" font-size="9" font-weight="bold" fill="#6a10e0" textLength="14" lengthAdjust="spacingAndGlyphs">2D</text></g></svg>
<span class="t " style="left:781px;top:525.5px;font-size:12px;line-height:16px;color:#111;transform:scaleX(0.8812);transform-origin:left;">荷重ケース結果表示 : モデル1</span>
<div class="r" style="left:1205px;top:533px;width:11px;height:1px;background:#222;"></div>
<div class="r" style="left:1251px;top:528px;width:10px;height:10px;border:1px solid #222;border-radius:1px;"></div>
<svg class="r" style="left:1296.5px;top:527.5px;" width="11" height="11" viewBox="0 0 11 11"><path d="M0.5 0.5 L10.5 10.5 M10.5 0.5 L0.5 10.5" stroke="#222" stroke-width="1.1" fill="none"/></svg>
<div class="r" style="left:752px;top:549px;width:28px;height:300px;background:#dcdcdc;border-bottom-left-radius:5px;"></div>
<div class="r" style="left:752px;top:549px;width:22px;height:300px;background:linear-gradient(90deg,#e6e9ee,#c3c9d3);border-bottom-left-radius:5px;"></div>
<div class="r" style="left:752px;top:551px;width:21px;height:72px;background:linear-gradient(90deg,#eef0f4,#b9c1cd);border:1px solid #c9ced6;border-left:none;"></div>
<span class="t" style="left:767px;top:555px;font-size:12px;line-height:14px;color:#111;transform-origin:0 0;transform:rotate(90deg) scaleX(0.75);">ナビゲーション</span>
<svg class="r" style="left:776px;top:680px;" width="3" height="36" viewBox="0 0 3 36"><rect x="0" y="0" width="3" height="3" fill="#fff"/><rect x="0" y="0" width="2" height="2" fill="#222"/><rect x="0" y="3" width="3" height="3" fill="#fff"/><rect x="0" y="3" width="2" height="2" fill="#222"/><rect x="0" y="6" width="3" height="3" fill="#fff"/><rect x="0" y="6" width="2" height="2" fill="#222"/><rect x="0" y="9" width="3" height="3" fill="#fff"/><rect x="0" y="9" width="2" height="2" fill="#222"/><rect x="0" y="12" width="3" height="3" fill="#fff"/><rect x="0" y="12" width="2" height="2" fill="#222"/><rect x="0" y="15" width="3" height="3" fill="#fff"/><rect x="0" y="15" width="2" height="2" fill="#222"/><rect x="0" y="18" width="3" height="3" fill="#fff"/><rect x="0" y="18" width="2" height="2" fill="#222"/><rect x="0" y="21" width="3" height="3" fill="#fff"/><rect x="0" y="21" width="2" height="2" fill="#222"/><rect x="0" y="24" width="3" height="3" fill="#fff"/><rect x="0" y="24" width="2" height="2" fill="#222"/><rect x="0" y="27" width="3" height="3" fill="#fff"/><rect x="0" y="27" width="2" height="2" fill="#222"/><rect x="0" y="30" width="3" height="3" fill="#fff"/><rect x="0" y="30" width="2" height="2" fill="#222"/><rect x="0" y="33" width="3" height="3" fill="#fff"/><rect x="0" y="33" width="2" height="2" fill="#222"/></svg>
<div class="r" style="left:780px;top:549px;width:544px;height:24px;background:linear-gradient(#ffffff,#f4f4f4 50%,#dedede);border:1px solid #b4b4b4;"></div>
<svg class="r" style="left:785.0px;top:553.5px" width="16" height="16" viewBox="0 0 16 16"><path d="M2 4.5 L2 2 L4.5 2 M7 2 L9.5 2 M12 2 L14.5 2 L14.5 4.5 M14.5 7 L14.5 9.5 M14.5 12 L14.5 14.5 L12 14.5 M9.5 14.5 L7 14.5 M4.5 14.5 L2 14.5 L2 12 M2 9.5 L2 7" fill="none" stroke="#111" stroke-width="1.5"/><circle cx="8.2" cy="8.2" r="2.5" fill="#111"/></svg><svg class="r" style="left:807.5px;top:553.5px" width="16" height="16" viewBox="0 0 16 16"><rect x="0.5" y="0.5" width="15" height="15" fill="#f4f8fc" stroke="#8aaed4"/><path d="M3 3 L13 3 L13 13 L3 13 Z" fill="none" stroke="#3f86c8" stroke-width="1"/><path d="M3 3 L6 6 M13 3 L10 6 M3 13 L6 10 M13 13 L10 10" stroke="#3f86c8" stroke-width="1.3"/><circle cx="8" cy="8" r="2.8" fill="#fff" stroke="#3f86c8" stroke-width="1.2"/></svg><svg class="r" style="left:831.0px;top:553.5px" width="16" height="16" viewBox="0 0 16 16"><path d="M1 5 L8 8 L8 15.5 L1 12.5 Z" fill="#e0182c" stroke="#111" stroke-width="1"/><path d="M8 8 L15 5 L15 12.5 L8 15.5 Z" fill="#fff" stroke="#111" stroke-width="1"/><path d="M1 5 L8 2 L15 5 L8 8 Z" fill="#fff" stroke="#111" stroke-width="1"/></svg><svg class="r" style="left:853.5px;top:553.5px" width="16" height="16" viewBox="0 0 16 16"><path d="M1 5 L8 8 L8 15.5 L1 12.5 Z" fill="#fff" stroke="#111" stroke-width="1"/><path d="M8 8 L15 5 L15 12.5 L8 15.5 Z" fill="#fff" stroke="#111" stroke-width="1"/><path d="M1 5 L8 2 L15 5 L8 8 Z" fill="#e0182c" stroke="#111" stroke-width="1"/></svg><svg class="r" style="left:876.5px;top:553.5px" width="16" height="16" viewBox="0 0 16 16"><path d="M1 5 L8 8 L8 15.5 L1 12.5 Z" fill="#fff" stroke="#111" stroke-width="1"/><path d="M8 8 L15 5 L15 12.5 L8 15.5 Z" fill="#e0182c" stroke="#111" stroke-width="1"/><path d="M1 5 L8 2 L15 5 L8 8 Z" fill="#fff" stroke="#111" stroke-width="1"/></svg><svg class="r" style="left:899.8px;top:553.5px" width="16" height="16" viewBox="0 0 16 16"><path d="M1 9 L7 7.5 L7 14 L1 15.5 Z" fill="#fff" stroke="#111"/><path d="M7 7.5 L15 2 L15 7.5 L7 14 Z" fill="#fff" stroke="#111"/><path d="M1 9 L10 3 L15 2 L7 7.5 Z" fill="#fff" stroke="#111"/></svg><svg class="r" style="left:930.5px;top:553.5px" width="16" height="16" viewBox="0 0 16 16"><rect x="0.7" y="0.7" width="13" height="12.6" fill="#fff" stroke="#e0182c" stroke-width="1.4"/><circle cx="7" cy="7" r="4.3" fill="#eef4fb" stroke="#6a7f9a" stroke-width="1.2"/><path d="M7 3 L7 11 M3 7 L11 7" stroke="#6a7f9a" stroke-width="0.9"/><path d="M10.5 10.5 L15 15" stroke="#888" stroke-width="1.4"/></svg><svg class="r" style="left:952.5px;top:553.5px" width="16" height="16" viewBox="0 0 16 16"><circle cx="7" cy="6.5" r="4.6" fill="#e6effa" stroke="#8aa0bd" stroke-width="1.3"/><rect x="4" y="5.5" width="6" height="2.2" fill="#1c3fb0"/><path d="M10.5 10 L14 14" stroke="#999" stroke-width="1.6"/></svg><svg class="r" style="left:976.0px;top:553.5px" width="16" height="16" viewBox="0 0 16 16"><path d="M2 14 L12 4 M4 13.5 L13 4.5" stroke="#111" stroke-width="1" fill="none"/><path d="M7 2.5 L14 2 L13.5 9 Z" fill="#fff" stroke="#111" stroke-width="1"/></svg><svg class="r" style="left:999.0px;top:553.5px" width="16" height="16" viewBox="0 0 16 16"><path d="M7.5 10.5 C3 10.5 1.5 8.5 1.5 7 C1.5 4.5 4.5 3.5 8 3.5 C11.5 3.5 14.5 4.8 14.5 7 C14.5 8.2 13.5 9 12.5 9.5" fill="none" stroke="#111" stroke-width="2.2"/><path d="M8.5 9 L13.5 9.5 L11 14 Z" fill="#111"/></svg><svg class="r" style="left:1022.5px;top:553.5px" width="16" height="16" viewBox="0 0 16 16"><circle cx="8" cy="8" r="6" fill="none" stroke="#9a9a9a" stroke-width="1"/><circle cx="8" cy="8" r="3.2" fill="none" stroke="#9a9a9a" stroke-width="1"/><path d="M8 0.5 L8 15.5 M0.5 8 L15.5 8" stroke="#9a9a9a" stroke-width="1"/><circle cx="8" cy="8" r="1.2" fill="#777"/></svg><svg class="r" style="left:1053.0px;top:553.5px" width="16" height="16" viewBox="0 0 16 16"><circle cx="8" cy="8" r="7.3" fill="#b9b9b9" stroke="#a2a2a2"/><path d="M12.5 8 L4.5 8 M8 4 L4 8 L8 12" stroke="#e9e9e9" stroke-width="2" fill="none"/></svg><svg class="r" style="left:1076.5px;top:553.5px" width="16" height="16" viewBox="0 0 16 16"><circle cx="8" cy="8" r="7.3" fill="#b9b9b9" stroke="#a2a2a2"/><path d="M3.5 8 L11.5 8 M8 4 L12 8 L8 12" stroke="#e9e9e9" stroke-width="2" fill="none"/></svg><svg class="r" style="left:1099.5px;top:553.5px" width="16" height="16" viewBox="0 0 16 16"><path d="M1 4 L1 1 L4 1 M12 1 L15 1 L15 4 M1 12 L1 15 L4 15" stroke="#3fa9f5" stroke-width="1.3" fill="none"/><path d="M8 3 L12 5 L12 9.5 L8 11.5 L4 9.5 L4 5 Z M4 5 L8 7 L12 5 M8 7 L8 11.5" fill="#d6ecfc" stroke="#3fa9f5" stroke-width="1"/><rect x="9" y="10" width="6.5" height="5" rx="1" fill="#2b8fe0"/><circle cx="12.2" cy="12.6" r="1.4" fill="#d6ecfc"/></svg><svg class="r" style="left:1122.5px;top:553.5px" width="16" height="16" viewBox="0 0 16 16"><path d="M1 4 L1 1 L4 1 M12 1 L15 1 L15 4 M1 12 L1 15 L4 15" stroke="#3fa9f5" stroke-width="1.3" fill="none"/><path d="M8 3 L12 5 L12 9.5 L8 11.5 L4 9.5 L4 5 Z M4 5 L8 7 L12 5 M8 7 L8 11.5" fill="#d6ecfc" stroke="#3fa9f5" stroke-width="1"/><rect x="9" y="9.5" width="6.5" height="6" fill="#d6ecfc" stroke="#2b8fe0"/><path d="M9 11.5 L15.5 11.5 M9 13.5 L15.5 13.5 M11.2 9.5 L11.2 15.5 M13.4 9.5 L13.4 15.5" stroke="#2b8fe0" stroke-width="0.7"/></svg><svg class="r" style="left:1152.0px;top:553.5px" width="16" height="16" viewBox="0 0 16 16"><path d="M6 1.5 L15.5 1.5 M7.5 3.5 L15.5 3.5 M9 5.5 L15.5 5.5 M10.5 7.5 L15.5 7.5" stroke="#128a2a" stroke-width="1.3"/><path d="M6 3 L15 3 M8 5 L15 5 M9.5 7 L15 7" stroke="#d8c020" stroke-width="0.6"/><path d="M1.5 1 L1.5 12.5 L4.3 10 L6.3 14.8 L8.3 13.9 L6.3 9.3 L10 9.3 Z" fill="#fff" stroke="#111" stroke-width="1"/></svg><svg class="r" style="left:1184.0px;top:553.5px" width="16" height="16" viewBox="0 0 16 16"><path d="M1 2.5 C1 1 3 0.5 4 1.5 L9 1.5 L9 12 L4 12 C3 13 1 12.5 1 11 Z" fill="#f7cf4a" stroke="#c79a1c" stroke-width="1"/><circle cx="8.8" cy="7" r="4" fill="#d9ecfb" stroke="#4a8fd0" stroke-width="1.4"/><path d="M11.5 10 L15 14.5" stroke="#d98a2c" stroke-width="2.2" stroke-linecap="round"/></svg><svg class="r" style="left:1215.0px;top:553.5px" width="16" height="16" viewBox="0 0 16 16"><path d="M1 4.5 L4.5 4.5 L5.8 2.5 L10.2 2.5 L11.5 4.5 L15 4.5 L15 13.5 L1 13.5 Z" fill="#111"/><circle cx="8" cy="8.8" r="3.1" fill="#fff"/><circle cx="8" cy="8.8" r="1.9" fill="#111"/></svg><svg class="r" style="left:1238.0px;top:553.5px" width="16" height="16" viewBox="0 0 16 16"><g transform="translate(1.5,-1)"><path d="M1 4.5 L4.5 4.5 L5.8 2.5 L10.2 2.5 L11.5 4.5 L15 4.5 L15 13.5 L1 13.5 Z" fill="#111"/><circle cx="8" cy="8.8" r="3.1" fill="#fff"/><circle cx="8" cy="8.8" r="1.9" fill="#111"/></g><path d="M0.5 6.5 L4.5 6.5 L6 8 L6 15.5 L0.5 15.5 Z" fill="#f3d36a" stroke="#c9a52c" stroke-width="0.8"/></svg>
<div class="r" style="left:922.0px;top:553px;width:1px;height:17px;background:#8e8e8e"></div><div class="r" style="left:923.0px;top:553px;width:1px;height:17px;background:#fff"></div><div class="r" style="left:1045.0px;top:553px;width:1px;height:17px;background:#8e8e8e"></div><div class="r" style="left:1046.0px;top:553px;width:1px;height:17px;background:#fff"></div><div class="r" style="left:1145.0px;top:553px;width:1px;height:17px;background:#8e8e8e"></div><div class="r" style="left:1146.0px;top:553px;width:1px;height:17px;background:#fff"></div><div class="r" style="left:1175.5px;top:553px;width:1px;height:17px;background:#8e8e8e"></div><div class="r" style="left:1176.5px;top:553px;width:1px;height:17px;background:#fff"></div><div class="r" style="left:1207.5px;top:553px;width:1px;height:17px;background:#8e8e8e"></div><div class="r" style="left:1208.5px;top:553px;width:1px;height:17px;background:#fff"></div>
<div class="r" style="left:780px;top:575px;width:528px;height:238.5px;background:#000;"></div>
<div class="r" style="left:1308px;top:575px;width:16px;height:238.5px;background:#f0f0f0;"></div>
<div class="r" style="left:1316px;top:593px;width:2px;height:204px;background:#8a8a8a;border-radius:1px;"></div>
<div class="r" style="left:780px;top:813.5px;width:544px;height:18px;background:#f0f0f0;"></div>
<div class="r" style="left:867px;top:822px;width:354px;height:2px;background:#8a8a8a;border-radius:1px;"></div>
<div class="r" style="left:780px;top:832px;width:544px;height:17px;background:#f0f0f0;border-bottom-right-radius:5px;"></div>
<span class="t " style="left:783px;top:832.5px;font-size:12px;line-height:16px;color:#111;transform:scaleX(1.0885);transform-origin:left;">x=3.207m, y=7.641m</span>
<div class="r" style="left:1029px;top:833px;width:1px;height:16px;background:#d0d0d0;"></div>
<span class="t " style="left:1034px;top:832.5px;font-size:12px;line-height:16px;color:#111;transform:scaleX(1.0610);transform-origin:left;">x = 0.914m, Mzl = -36.483kNm</span>
<svg class="r" style="left:0;top:0" width="1339" height="856" viewBox="0 0 1339 856"><defs><clipPath id="cv2"><rect x="780" y="575" width="528" height="238.5"/></clipPath><linearGradient id="fg0" gradientUnits="userSpaceOnUse" x1="943.9" y1="802.8" x2="943.9" y2="702.8"><stop offset="0" stop-color="#4fb4f4"/><stop offset="1" stop-color="#f07ac4"/></linearGradient><linearGradient id="fg1" gradientUnits="userSpaceOnUse" x1="943.9" y1="702.8" x2="947.5" y2="676.8"><stop offset="0" stop-color="#4fb4f4"/><stop offset="1" stop-color="#f07ac4"/></linearGradient><linearGradient id="fg2" gradientUnits="userSpaceOnUse" x1="947.5" y1="676.8" x2="957.4" y2="652.8"><stop offset="0" stop-color="#4fb4f4"/><stop offset="1" stop-color="#f07ac4"/></linearGradient><linearGradient id="fg3" gradientUnits="userSpaceOnUse" x1="957.4" y1="652.8" x2="973.5" y2="632.4"><stop offset="0" stop-color="#4fb4f4"/><stop offset="1" stop-color="#f07ac4"/></linearGradient><linearGradient id="fg4" gradientUnits="userSpaceOnUse" x1="973.5" y1="632.4" x2="994" y2="616.2"><stop offset="0" stop-color="#4fb4f4"/><stop offset="1" stop-color="#f07ac4"/></linearGradient><linearGradient id="fg5" gradientUnits="userSpaceOnUse" x1="994" y1="616.2" x2="1017.8" y2="606.4"><stop offset="0" stop-color="#4fb4f4"/><stop offset="1" stop-color="#f07ac4"/></linearGradient><linearGradient id="fg6" gradientUnits="userSpaceOnUse" x1="1017.8" y1="606.4" x2="1043.8" y2="603"><stop offset="0" stop-color="#4fb4f4"/><stop offset="1" stop-color="#f07ac4"/></linearGradient><linearGradient id="fg7" gradientUnits="userSpaceOnUse" x1="1043.8" y1="603" x2="1069.8" y2="606.4"><stop offset="0" stop-color="#4fb4f4"/><stop offset="1" stop-color="#f07ac4"/></linearGradient><linearGradient id="fg8" gradientUnits="userSpaceOnUse" x1="1069.8" y1="606.4" x2="1093.8" y2="616.2"><stop offset="0" stop-color="#4fb4f4"/><stop offset="1" stop-color="#f07ac4"/></linearGradient><linearGradient id="fg9" gradientUnits="userSpaceOnUse" x1="1093.8" y1="616.2" x2="1114.2" y2="632.4"><stop offset="0" stop-color="#4fb4f4"/><stop offset="1" stop-color="#f07ac4"/></linearGradient><linearGradient id="fg10" gradientUnits="userSpaceOnUse" x1="1114.2" y1="632.4" x2="1130.4" y2="652.8"><stop offset="0" stop-color="#4fb4f4"/><stop offset="1" stop-color="#f07ac4"/></linearGradient><linearGradient id="fg11" gradientUnits="userSpaceOnUse" x1="1130.4" y1="652.8" x2="1140.4" y2="676.8"><stop offset="0" stop-color="#4fb4f4"/><stop offset="1" stop-color="#f07ac4"/></linearGradient><linearGradient id="fg12" gradientUnits="userSpaceOnUse" x1="1140.4" y1="676.8" x2="1144" y2="702.8"><stop offset="0" stop-color="#4fb4f4"/><stop offset="1" stop-color="#f07ac4"/></linearGradient><linearGradient id="fg13" gradientUnits="userSpaceOnUse" x1="1144" y1="702.8" x2="1144" y2="802.8"><stop offset="0" stop-color="#4fb4f4"/><stop offset="1" stop-color="#f07ac4"/></linearGradient></defs><g clip-path="url(#cv2)"><path d="M915.5 575 L915.5 814" stroke="#404040" stroke-width="1" shape-rendering="crispEdges"/><path d="M943.5 575 L943.5 814" stroke="#404040" stroke-width="1" shape-rendering="crispEdges"/><path d="M972.5 575 L972.5 814" stroke="#404040" stroke-width="1" shape-rendering="crispEdges"/><path d="M1000.5 575 L1000.5 814" stroke="#404040" stroke-width="1" shape-rendering="crispEdges"/><path d="M1029.5 575 L1029.5 814" stroke="#404040" stroke-width="1" shape-rendering="crispEdges"/><path d="M1058.5 575 L1058.5 814" stroke="#404040" stroke-width="1" shape-rendering="crispEdges"/><path d="M1086.5 575 L1086.5 814" stroke="#404040" stroke-width="1" shape-rendering="crispEdges"/><path d="M1115.5 575 L1115.5 814" stroke="#404040" stroke-width="1" shape-rendering="crispEdges"/><path d="M1143.5 575 L1143.5 814" stroke="#404040" stroke-width="1" shape-rendering="crispEdges"/><path d="M1172.5 575 L1172.5 814" stroke="#404040" stroke-width="1" shape-rendering="crispEdges"/><path d="M915 603.5 L1173 603.5" stroke="#404040" stroke-width="1" shape-rendering="crispEdges"/><path d="M915 631.5 L1173 631.5" stroke="#404040" stroke-width="1" shape-rendering="crispEdges"/><path d="M915 660.5 L1173 660.5" stroke="#404040" stroke-width="1" shape-rendering="crispEdges"/><path d="M915 688.5 L1173 688.5" stroke="#404040" stroke-width="1" shape-rendering="crispEdges"/><path d="M915 717.5 L1173 717.5" stroke="#404040" stroke-width="1" shape-rendering="crispEdges"/><path d="M915 745.5 L1173 745.5" stroke="#404040" stroke-width="1" shape-rendering="crispEdges"/><path d="M915 774.5 L1173 774.5" stroke="#404040" stroke-width="1" shape-rendering="crispEdges"/><path d="M915 802.5 L1173 802.5" stroke="#404040" stroke-width="1" shape-rendering="crispEdges"/><path d="M943.9 802.8 L943.9 702.8" stroke="url(#fg0)" stroke-width="1.1"/><path d="M943.9 702.8 L947.5 676.8" stroke="url(#fg1)" stroke-width="1.1"/><path d="M947.5 676.8 L957.4 652.8" stroke="url(#fg2)" stroke-width="1.1"/><path d="M957.4 652.8 L973.5 632.4" stroke="url(#fg3)" stroke-width="1.1"/><path d="M973.5 632.4 L994 616.2" stroke="url(#fg4)" stroke-width="1.1"/><path d="M994 616.2 L1017.8 606.4" stroke="url(#fg5)" stroke-width="1.1"/><path d="M1017.8 606.4 L1043.8 603" stroke="url(#fg6)" stroke-width="1.1"/><path d="M1043.8 603 L1069.8 606.4" stroke="url(#fg7)" stroke-width="1.1"/><path d="M1069.8 606.4 L1093.8 616.2" stroke="url(#fg8)" stroke-width="1.1"/><path d="M1093.8 616.2 L1114.2 632.4" stroke="url(#fg9)" stroke-width="1.1"/><path d="M1114.2 632.4 L1130.4 652.8" stroke="url(#fg10)" stroke-width="1.1"/><path d="M1130.4 652.8 L1140.4 676.8" stroke="url(#fg11)" stroke-width="1.1"/><path d="M1140.4 676.8 L1144 702.8" stroke="url(#fg12)" stroke-width="1.1"/><path d="M1144 702.8 L1144 802.8" stroke="url(#fg13)" stroke-width="1.1"/><path d="M943.9 802.8 C952 790 966 760 967.5 728 C967.6 720 966.5 710 963.8 703.5 L953 703.5 M953 702 L963.8 702 C963 692 961.5 684 961.2 677.2 L952 677 M961.2 677.2 C960.5 668 960.8 660 961.5 653.9 L957.4 652.8 M961.5 653.9 C963 646 967 637 971.4 627.9 L973.5 632.4" stroke="#ff0000" stroke-width="1.1" fill="none"/><g transform="translate(2087.9,0) scale(-1,1)"><path d="M943.9 802.8 C952 790 966 760 967.5 728 C967.6 720 966.5 710 963.8 703.5 L953 703.5 M953 702 L963.8 702 C963 692 961.5 684 961.2 677.2 L952 677 M961.2 677.2 C960.5 668 960.8 660 961.5 653.9 L957.4 652.8 M961.5 653.9 C963 646 967 637 971.4 627.9 L973.5 632.4" stroke="#ff0000" stroke-width="1.1" fill="none"/></g><path d="M971.4 627.9 L987.5 607.3 L991 611.7 L994 616.2 L990.7 604.6 L1011.7 592.4 L1016.2 601.9 L1017.8 606.4 L1016.7 590.8 L1038.2 586.3 L1041 586 L1043 597.4 L1043.8 603 L1045.8 585.4 L1049 586 L1071.7 590.8 L1069.8 606.4 L1071.4 601.9 L1076.2 592.4 L1097.4 604.6 L1093.8 616.2 L1096.8 611.7 L1100.4 607.3 L1116.6 627.9" stroke="#ff0000" stroke-width="1.1" fill="none"/><path d="M943.9 805 L939 814 L949 814 Z M1144 805 L1139 814 L1149 814 Z" stroke="#f0c8e8" stroke-width="1" fill="none"/><rect x="946.5" y="758.5" width="9" height="13" fill="none" stroke="#30c0ff" stroke-width="1" shape-rendering="crispEdges"/><text x="951.0" y="770.0" font-size="13" fill="#30c0ff" text-anchor="middle" textLength="6" lengthAdjust="spacingAndGlyphs">1</text><rect x="948.5" y="695.5" width="9" height="13" fill="none" stroke="#30c0ff" stroke-width="1" shape-rendering="crispEdges"/><text x="953.0" y="707.0" font-size="13" fill="#30c0ff" text-anchor="middle" textLength="6" lengthAdjust="spacingAndGlyphs">2</text><rect x="954.5" y="670.5" width="9" height="13" fill="none" stroke="#30c0ff" stroke-width="1" shape-rendering="crispEdges"/><text x="959.0" y="682.0" font-size="13" fill="#30c0ff" text-anchor="middle" textLength="6" lengthAdjust="spacingAndGlyphs">3</text><rect x="967.5" y="648.5" width="9" height="13" fill="none" stroke="#30c0ff" stroke-width="1" shape-rendering="crispEdges"/><text x="972.0" y="660.0" font-size="13" fill="#30c0ff" text-anchor="middle" textLength="6" lengthAdjust="spacingAndGlyphs">4</text><rect x="986.5" y="629.5" width="9" height="13" fill="none" stroke="#30c0ff" stroke-width="1" shape-rendering="crispEdges"/><text x="991.0" y="641.0" font-size="13" fill="#30c0ff" text-anchor="middle" textLength="6" lengthAdjust="spacingAndGlyphs">5</text><rect x="1008.5" y="616.5" width="9" height="13" fill="none" stroke="#30c0ff" stroke-width="1" shape-rendering="crispEdges"/><text x="1013.0" y="628.0" font-size="13" fill="#30c0ff" text-anchor="middle" textLength="6" lengthAdjust="spacingAndGlyphs">6</text><rect x="1033.5" y="610.5" width="9" height="13" fill="none" stroke="#30c0ff" stroke-width="1" shape-rendering="crispEdges"/><text x="1038.0" y="622.0" font-size="13" fill="#30c0ff" text-anchor="middle" textLength="6" lengthAdjust="spacingAndGlyphs">7</text><rect x="1059.5" y="610.5" width="9" height="13" fill="none" stroke="#30c0ff" stroke-width="1" shape-rendering="crispEdges"/><text x="1064.0" y="622.0" font-size="13" fill="#30c0ff" text-anchor="middle" textLength="6" lengthAdjust="spacingAndGlyphs">8</text><rect x="1084.5" y="616.5" width="9" height="13" fill="none" stroke="#30c0ff" stroke-width="1" shape-rendering="crispEdges"/><text x="1089.0" y="628.0" font-size="13" fill="#30c0ff" text-anchor="middle" textLength="6" lengthAdjust="spacingAndGlyphs">9</text><rect x="1106.5" y="629.5" width="16" height="13" fill="none" stroke="#30c0ff" stroke-width="1" shape-rendering="crispEdges"/><text x="1114.5" y="641.0" font-size="13" fill="#30c0ff" text-anchor="middle" textLength="12" lengthAdjust="spacingAndGlyphs">10</text><rect x="1125.5" y="648.5" width="16" height="13" fill="none" stroke="#30c0ff" stroke-width="1" shape-rendering="crispEdges"/><text x="1133.5" y="660.0" font-size="13" fill="#30c0ff" text-anchor="middle" textLength="12" lengthAdjust="spacingAndGlyphs">11</text><rect x="1138.5" y="670.5" width="16" height="13" fill="none" stroke="#30c0ff" stroke-width="1" shape-rendering="crispEdges"/><text x="1146.5" y="682.0" font-size="13" fill="#30c0ff" text-anchor="middle" textLength="12" lengthAdjust="spacingAndGlyphs">12</text><rect x="1145.5" y="695.5" width="16" height="13" fill="none" stroke="#30c0ff" stroke-width="1" shape-rendering="crispEdges"/><text x="1153.5" y="707.0" font-size="13" fill="#30c0ff" text-anchor="middle" textLength="12" lengthAdjust="spacingAndGlyphs">13</text><rect x="1146.5" y="758.5" width="16" height="13" fill="none" stroke="#30c0ff" stroke-width="1" shape-rendering="crispEdges"/><text x="1154.5" y="770.0" font-size="13" fill="#30c0ff" text-anchor="middle" textLength="12" lengthAdjust="spacingAndGlyphs">14</text><path d="M938.3 802.8 L943.9 797.2 L949.5 802.8 L943.9 808.4 Z" fill="#1e5a1e"/><path d="M938.3 702.8 L943.9 697.2 L949.5 702.8 L943.9 708.4 Z" fill="#1e5a1e"/><path d="M941.9 676.8 L947.5 671.2 L953.1 676.8 L947.5 682.4 Z" fill="#1e5a1e"/><path d="M951.8 652.8 L957.4 647.2 L963.0 652.8 L957.4 658.4 Z" fill="#1e5a1e"/><path d="M967.9 632.4 L973.5 626.8 L979.1 632.4 L973.5 638.0 Z" fill="#1e5a1e"/><path d="M988.4 616.2 L994.0 610.6 L999.6 616.2 L994.0 621.8 Z" fill="#1e5a1e"/><path d="M1012.2 606.4 L1017.8 600.8 L1023.4 606.4 L1017.8 612.0 Z" fill="#1e5a1e"/><path d="M1038.2 603.0 L1043.8 597.4 L1049.4 603.0 L1043.8 608.6 Z" fill="#1e5a1e"/><path d="M1064.2 606.4 L1069.8 600.8 L1075.4 606.4 L1069.8 612.0 Z" fill="#1e5a1e"/><path d="M1088.2 616.2 L1093.8 610.6 L1099.4 616.2 L1093.8 621.8 Z" fill="#1e5a1e"/><path d="M1108.6 632.4 L1114.2 626.8 L1119.8 632.4 L1114.2 638.0 Z" fill="#1e5a1e"/><path d="M1124.8 652.8 L1130.4 647.2 L1136.0 652.8 L1130.4 658.4 Z" fill="#1e5a1e"/><path d="M1134.8 676.8 L1140.4 671.2 L1146.0 676.8 L1140.4 682.4 Z" fill="#1e5a1e"/><path d="M1138.4 702.8 L1144.0 697.2 L1149.6 702.8 L1144.0 708.4 Z" fill="#1e5a1e"/><path d="M1138.4 802.8 L1144.0 797.2 L1149.6 802.8 L1144.0 808.4 Z" fill="#1e5a1e"/><path d="M839.8 754.7 L839.8 719" stroke="#10a010" stroke-width="2"/><path d="M836.6 724 L839.8 715 L843 724 Z" fill="#10a010"/><path d="M839.8 753.9 L874 753.9" stroke="#0a96ff" stroke-width="2"/><path d="M870 750.9 L879 753.9 L870 756.9 Z" fill="#0a96ff"/><text x="835.9" y="707.8" font-size="14" fill="#10a010" text-anchor="middle" textLength="8" lengthAdjust="spacingAndGlyphs">Y</text><text x="883.7" y="772" font-size="14" fill="#0a96ff" text-anchor="middle" textLength="8" lengthAdjust="spacingAndGlyphs">X</text><text x="781.5" y="802" font-size="12.5" font-weight="bold" fill="#ff0000" textLength="25.5" lengthAdjust="spacingAndGlyphs">+Mzl</text><text x="890" y="802" font-size="12.5" font-weight="bold" fill="#ff0000" textLength="25" lengthAdjust="spacingAndGlyphs">+Mzl</text><path d="M821.7 810.2 C806 806 805.5 788 821 784.5" stroke="#ff0000" stroke-width="1.1" fill="none"/><path d="M818.5 782.5 L824.5 782.8 L821 787.5 Z" fill="#ff0000"/><path d="M872.5 810.2 C890.5 806 891 788 875.5 784.5" stroke="#ff0000" stroke-width="1.1" fill="none"/><path d="M878 782.5 L872 782.8 L875.5 787.5 Z" fill="#ff0000"/><path d="M828 797.5 L867 797.5" stroke="#9a9a9a" stroke-width="1" shape-rendering="crispEdges"/><text x="824" y="799.5" font-size="12" fill="#9a9a9a">i</text><text x="870" y="799.5" font-size="12" fill="#9a9a9a">j</text></g></svg>
<span class="t " style="left:785px;top:581.5px;font-size:15px;line-height:19px;color:#c000ff;font-weight:bold;transform:scaleX(0.9778);transform-origin:left;">断面力</span>
<span class="t " style="left:812px;top:601.5px;font-size:11px;line-height:15px;color:#c000ff;font-weight:bold;transform:scaleX(1.0938);transform-origin:left;">荷重-1</span>
</body></html>
